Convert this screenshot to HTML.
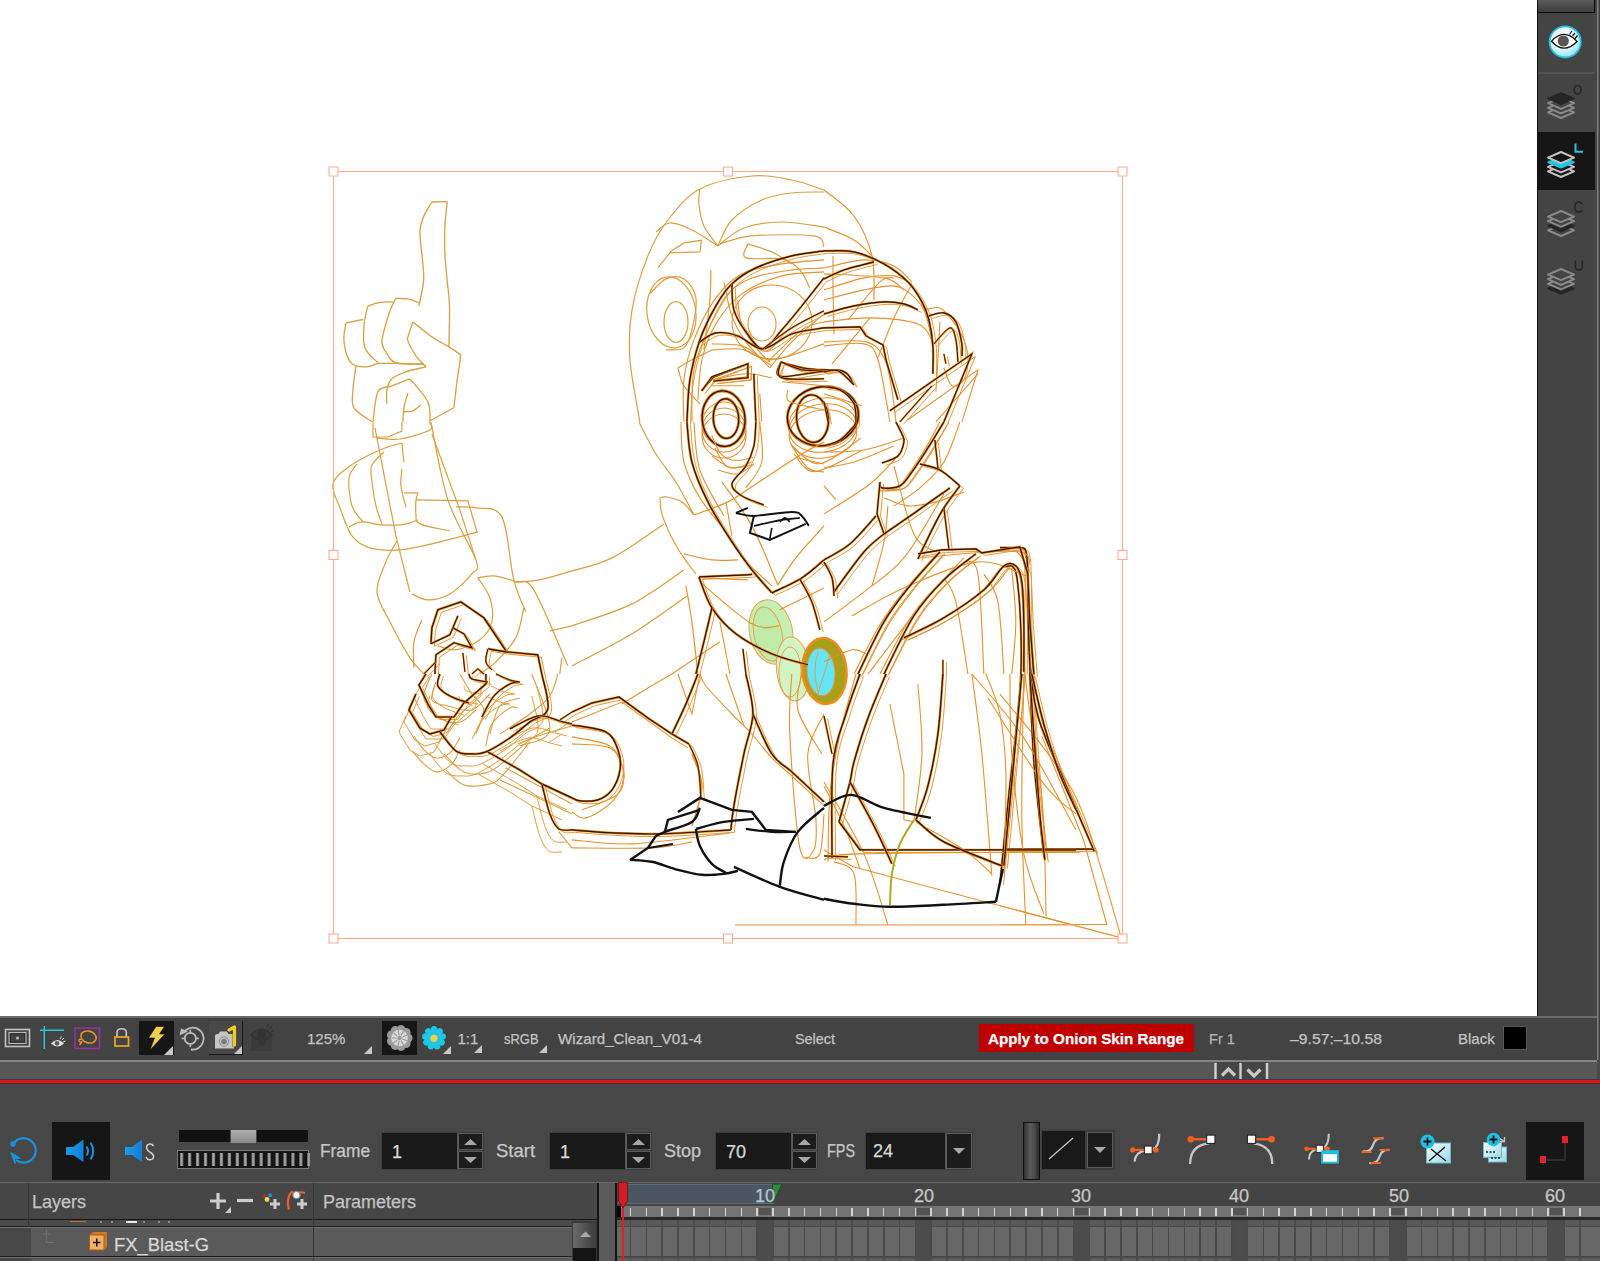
<!DOCTYPE html>
<html><head><meta charset="utf-8"><style>*{margin:0;padding:0;box-sizing:border-box}
html,body{width:1600px;height:1261px;overflow:hidden;background:#474747;font-family:"Liberation Sans",sans-serif;position:relative}
.a{position:absolute}
.t{position:absolute;white-space:nowrap;line-height:1;-webkit-text-stroke:0.25px currentColor}
</style></head><body>
<div class="a" style="left:0px;top:0px;width:1537px;height:1016px;background:#fff;"></div>
<svg class="a" style="left:0;top:0" width="1537" height="1016" viewBox="0 0 1537 1016"><path d="M827.5,858.4 L851.5,859.4" fill="none" stroke="#e49a3a" stroke-width="1"/><path d="M827.5,718.5 L835.5,756.4" fill="none" stroke="#e49a3a" stroke-width="1"/><path d="M1035.3,676.5 C1037.3,684.8 1042.7,709.8 1047.3,726.5 C1052.0,743.1 1057.9,762.1 1063.3,776.4 C1068.7,790.7 1076.8,806.4 1079.5,812.4" fill="none" stroke="#e49a3a" stroke-width="1"/><path d="M1033.3,676.5 C1034.0,686.5 1035.7,713.1 1037.3,736.5 C1039.0,759.8 1041.5,795.4 1043.3,816.4 C1045.2,837.4 1047.5,854.7 1048.3,862.4" fill="none" stroke="#e49a3a" stroke-width="1"/><path d="M1025.3,676.5 C1024.3,687.5 1022.3,710.5 1019.3,742.4 C1016.3,774.4 1009.4,847.4 1007.4,868.3" fill="none" stroke="#e49a3a" stroke-width="1"/><path d="M919.4,822.4 C924.1,826.0 933.1,836.7 947.4,844.4 C961.7,852.0 995.7,864.3 1005.4,868.3" fill="none" stroke="#e49a3a" stroke-width="1"/><path d="M946.4,676.5 C945.6,686.5 943.9,717.8 941.4,736.5 C938.9,755.1 935.1,774.1 931.4,788.4 C927.8,802.7 921.4,816.7 919.4,822.4" fill="none" stroke="#e49a3a" stroke-width="1"/><path d="M853.5,784.4 C857.5,791.7 870.5,814.7 877.5,828.4 C884.5,842.0 892.4,860.0 895.4,866.3" fill="none" stroke="#e49a3a" stroke-width="1"/><path d="M842.5,824.4 L863.5,852.4 L1079.5,852.4" fill="none" stroke="#e49a3a" stroke-width="1"/><path d="M889.5,676.5 C886.5,683.8 876.8,705.8 871.5,720.5 C866.1,735.1 860.5,753.8 857.5,764.4 C854.5,775.1 856.0,774.4 853.5,784.4 C851.0,794.4 844.3,817.7 842.5,824.4" fill="none" stroke="#e49a3a" stroke-width="1"/><path d="M863.5,676.5 C861.1,683.2 854.0,701.5 849.5,716.5 C845.0,731.5 838.8,742.4 836.5,766.4 C834.2,790.4 835.7,844.7 835.5,860.4" fill="none" stroke="#e49a3a" stroke-width="1"/><path d="M756.4,716.5 C759.5,723.1 768.8,746.8 775.3,756.4 C781.8,766.1 786.6,766.4 795.3,774.4 C804.0,782.4 822.1,799.4 827.5,804.4" fill="none" stroke="#e49a3a" stroke-width="1"/><path d="M675.4,736.5 C677.8,731.5 685.1,716.5 689.4,706.5 C693.7,696.5 699.4,681.5 701.4,676.5" fill="none" stroke="#e49a3a" stroke-width="1"/><path d="M734.4,832.4 C734.9,828.4 735.2,821.1 737.4,808.4 C739.5,795.7 744.2,771.8 747.4,756.4 C750.5,741.1 756.0,729.8 756.4,716.5 C756.7,703.1 750.5,683.2 749.4,676.5" fill="none" stroke="#e49a3a" stroke-width="1"/><path d="M575.5,832.4 C582.2,832.9 600.5,834.7 615.5,835.4 C630.5,836.0 645.6,836.9 665.4,836.4 C685.2,835.9 722.9,833.0 734.4,832.4" fill="none" stroke="#e49a3a" stroke-width="1"/><path d="M692.4,746.4 C693.9,750.1 699.4,759.4 701.4,768.4 C703.4,777.4 703.9,795.1 704.4,800.4" fill="none" stroke="#e49a3a" stroke-width="1"/><path d="M575.5,727.5 C581.2,728.6 601.8,730.3 609.5,734.5 C617.1,738.6 619.1,746.1 621.5,752.4 C623.8,758.8 624.5,765.8 623.5,772.4 C622.5,779.1 619.1,787.4 615.5,792.4 C611.8,797.4 606.8,800.6 601.5,802.4 C596.2,804.2 587.8,803.7 583.5,803.4 C579.2,803.1 576.8,800.9 575.5,800.4" fill="none" stroke="#e49a3a" stroke-width="1"/><path d="M575.5,714.5 L595.5,705.5 L622.5,699.5 L651.4,720.5 L675.4,736.5 L692.4,746.4" fill="none" stroke="#e49a3a" stroke-width="1"/><path d="M485.9,696.0 C488.2,697.0 495.9,700.7 499.8,702.0 C503.8,703.3 508.2,703.7 509.8,704.0" fill="none" stroke="#e49a3a" stroke-width="1"/><path d="M490.9,686.0 C493.2,687.0 500.9,690.7 504.8,692.0 C508.8,693.3 513.2,693.7 514.8,694.0" fill="none" stroke="#e49a3a" stroke-width="1"/><path d="M499.4,676.5 C501.7,677.5 509.4,681.2 513.3,682.5 C517.3,683.8 521.7,684.2 523.3,684.5" fill="none" stroke="#e49a3a" stroke-width="1"/><path d="M471.9,739.0 C473.9,735.5 479.2,723.5 483.9,718.0 C488.5,712.5 495.5,708.3 499.8,706.0 C504.2,703.7 508.2,704.3 509.8,704.0" fill="none" stroke="#e49a3a" stroke-width="1"/><path d="M476.9,729.0 C478.9,725.5 484.2,713.5 488.9,708.0 C493.5,702.5 500.5,698.3 504.8,696.0 C509.2,693.7 513.2,694.3 514.8,694.0" fill="none" stroke="#e49a3a" stroke-width="1"/><path d="M485.4,719.5 C487.4,716.0 492.7,704.0 497.4,698.5 C502.0,693.0 509.0,688.8 513.3,686.5 C517.7,684.2 521.7,684.8 523.3,684.5" fill="none" stroke="#e49a3a" stroke-width="1"/><path d="M531.8,805.9 C533.2,810.9 537.0,828.4 539.8,835.9 C542.6,843.4 545.1,848.2 548.8,850.9 C552.5,853.5 559.8,851.7 562.0,851.9" fill="none" stroke="#e49a3a" stroke-width="1"/><path d="M536.8,795.9 C538.2,800.9 542.0,818.4 544.8,825.9 C547.6,833.4 550.1,838.2 553.8,840.9 C557.5,843.5 564.8,841.7 567.0,841.9" fill="none" stroke="#e49a3a" stroke-width="1"/><path d="M545.3,786.4 C546.7,791.4 550.5,808.9 553.3,816.4 C556.1,823.9 558.6,828.7 562.3,831.4 C566.0,834.0 573.3,832.2 575.5,832.4" fill="none" stroke="#e49a3a" stroke-width="1"/><path d="M477.9,773.9 L509.8,791.9 L531.8,805.9 L562.0,819.9" fill="none" stroke="#e49a3a" stroke-width="1"/><path d="M482.9,763.9 L514.8,781.9 L536.8,795.9 L567.0,809.9" fill="none" stroke="#e49a3a" stroke-width="1"/><path d="M491.4,754.4 L523.3,772.4 L545.3,786.4 L575.5,800.4" fill="none" stroke="#e49a3a" stroke-width="1"/><path d="M549.8,742.0 L562.0,734.0" fill="none" stroke="#e49a3a" stroke-width="1"/><path d="M554.8,732.0 L567.0,724.0" fill="none" stroke="#e49a3a" stroke-width="1"/><path d="M563.3,722.5 L575.5,714.5" fill="none" stroke="#e49a3a" stroke-width="1"/><path d="M499.8,751.0 C504.5,748.8 519.5,739.3 527.8,738.0 C536.2,736.6 544.1,741.6 549.8,743.0 C555.5,744.3 560.0,745.5 562.0,746.0" fill="none" stroke="#e49a3a" stroke-width="1"/><path d="M504.8,741.0 C509.5,738.8 524.5,729.3 532.8,728.0 C541.2,726.6 549.1,731.6 554.8,733.0 C560.5,734.3 565.0,735.5 567.0,736.0" fill="none" stroke="#e49a3a" stroke-width="1"/><path d="M513.3,731.5 C518.0,729.3 533.0,719.8 541.3,718.5 C549.7,717.1 557.6,722.1 563.3,723.5 C569.0,724.8 573.5,726.0 575.5,726.5" fill="none" stroke="#e49a3a" stroke-width="1"/><path d="M429.9,754.0 C432.6,757.1 440.6,769.3 445.9,772.9 C451.2,776.6 456.9,775.8 461.9,775.9 C466.9,776.1 469.5,776.6 475.9,773.9 C482.2,771.3 492.5,764.9 499.8,759.9 C507.2,755.0 513.5,748.8 519.8,744.0 C526.2,739.1 535.8,739.0 537.8,731.0 C539.8,723.0 532.8,701.8 531.8,696.0" fill="none" stroke="#e49a3a" stroke-width="1"/><path d="M434.9,744.0 C437.6,747.1 445.6,759.3 450.9,762.9 C456.2,766.6 461.9,765.8 466.9,765.9 C471.9,766.1 474.5,766.6 480.9,763.9 C487.2,761.3 497.5,754.9 504.8,749.9 C512.2,745.0 518.5,738.8 524.8,734.0 C531.2,729.1 540.8,729.0 542.8,721.0 C544.8,713.0 537.8,691.8 536.8,686.0" fill="none" stroke="#e49a3a" stroke-width="1"/><path d="M443.4,734.5 C446.1,737.6 454.1,749.8 459.4,753.4 C464.7,757.1 470.4,756.3 475.4,756.4 C480.4,756.6 483.0,757.1 489.4,754.4 C495.7,751.8 506.0,745.4 513.3,740.4 C520.7,735.5 527.0,729.3 533.3,724.5 C539.7,719.6 549.3,719.5 551.3,711.5 C553.3,703.5 546.3,682.3 545.3,676.5" fill="none" stroke="#e49a3a" stroke-width="1"/><path d="M405.9,716.0 L398.9,732.0 L409.9,750.0 L419.9,756.0 L433.9,752.0 L441.9,738.0" fill="none" stroke="#e49a3a" stroke-width="1"/><path d="M410.9,706.0 L403.9,722.0 L414.9,740.0 L424.9,746.0 L438.9,742.0 L446.9,728.0" fill="none" stroke="#e49a3a" stroke-width="1"/><path d="M419.4,696.5 L412.4,712.5 L423.4,730.5 L433.4,736.5 L447.4,732.5 L455.4,718.5" fill="none" stroke="#e49a3a" stroke-width="1"/><path d="M458.9,696.0 C459.4,696.8 458.7,699.7 461.9,701.0 C465.0,702.3 475.2,703.5 477.9,704.0" fill="none" stroke="#e49a3a" stroke-width="1"/><path d="M463.9,686.0 C464.4,686.8 463.7,689.7 466.9,691.0 C470.0,692.3 480.2,693.5 482.9,694.0" fill="none" stroke="#e49a3a" stroke-width="1"/><path d="M472.4,676.5 C472.9,677.3 472.2,680.2 475.4,681.5 C478.5,682.8 488.7,684.0 491.4,684.5" fill="none" stroke="#e49a3a" stroke-width="1"/><path d="M429.9,696.0 C429.6,698.0 426.2,704.3 427.9,708.0 C429.6,711.7 434.7,715.2 439.9,718.0 C445.1,720.8 455.7,723.8 458.9,725.0" fill="none" stroke="#e49a3a" stroke-width="1"/><path d="M434.9,686.0 C434.6,688.0 431.2,694.3 432.9,698.0 C434.6,701.7 439.7,705.2 444.9,708.0 C450.1,710.8 460.7,713.8 463.9,715.0" fill="none" stroke="#e49a3a" stroke-width="1"/><path d="M443.4,676.5 C443.1,678.5 439.7,684.8 441.4,688.5 C443.1,692.2 448.2,695.7 453.4,698.5 C458.6,701.3 469.2,704.3 472.4,705.5" fill="none" stroke="#e49a3a" stroke-width="1"/><path d="M415.9,696.0 L408.9,707.0 L417.9,726.0 L425.9,739.0 L443.9,739.0 L453.9,725.0 L475.9,706.0 L475.9,696.0" fill="none" stroke="#e49a3a" stroke-width="1"/><path d="M420.9,686.0 L413.9,697.0 L422.9,716.0 L430.9,729.0 L448.9,729.0 L458.9,715.0 L480.9,696.0 L480.9,686.0" fill="none" stroke="#e49a3a" stroke-width="1"/><path d="M429.4,676.5 L422.4,687.5 L431.4,706.5 L439.4,719.5 L457.4,719.5 L467.4,705.5 L489.4,686.5 L489.4,676.5" fill="none" stroke="#e49a3a" stroke-width="1"/><path d="M946.4,662.3 L946.4,676.5" fill="none" stroke="#e49a3a" stroke-width="1"/><path d="M827.5,564.4 C828.8,567.1 833.8,574.7 835.5,580.4 C837.2,586.0 837.2,595.4 837.5,598.4" fill="none" stroke="#e49a3a" stroke-width="1"/><path d="M907.4,640.3 C914.1,637.0 934.1,628.3 947.4,620.3 C960.7,612.3 977.4,601.0 987.4,592.4 C997.4,583.7 1002.0,572.4 1007.4,568.4 C1012.7,564.4 1016.3,565.7 1019.3,568.4 C1022.3,571.0 1024.0,575.0 1025.3,584.4 C1026.7,593.7 1027.0,609.4 1027.3,624.3 C1027.7,639.3 1027.3,666.0 1027.3,674.3" fill="none" stroke="#e49a3a" stroke-width="1"/><path d="M943.4,554.4 C938.4,560.1 922.8,576.7 913.4,588.4 C904.1,600.0 896.1,609.7 887.5,624.3 C878.8,639.0 865.8,667.8 861.5,676.5" fill="none" stroke="#e49a3a" stroke-width="1"/><path d="M979.4,556.4 C974.0,560.7 957.7,572.0 947.4,582.4 C937.1,592.7 927.4,602.7 917.4,618.3 C907.4,634.0 892.4,666.8 887.5,676.5" fill="none" stroke="#e49a3a" stroke-width="1"/><path d="M921.4,556.4 L945.4,552.4 L979.4,551.4 L985.4,555.4 L1023.3,549.4 L1031.3,576.4 L1033.3,624.3 L1037.3,676.5" fill="none" stroke="#e49a3a" stroke-width="1"/><path d="M947.4,510.4 L952.4,551.4" fill="none" stroke="#e49a3a" stroke-width="1"/><path d="M963.4,488.4 C960.7,492.1 952.1,503.1 947.4,510.4 C942.7,517.8 939.7,523.9 935.4,532.4 C931.1,540.9 923.8,556.6 921.4,561.4" fill="none" stroke="#e49a3a" stroke-width="1"/><path d="M837.5,594.4 C842.5,587.7 859.1,564.1 867.5,554.4 C875.8,544.7 884.1,539.4 887.5,536.4" fill="none" stroke="#e49a3a" stroke-width="1"/><path d="M887.5,536.4 C892.8,532.7 908.4,522.1 919.4,514.4 C930.4,506.8 947.7,494.4 953.4,490.4" fill="none" stroke="#e49a3a" stroke-width="1"/><path d="M827.5,562.4 C831.8,559.7 844.8,553.7 853.5,546.4 C862.1,539.1 875.1,523.1 879.5,518.4" fill="none" stroke="#e49a3a" stroke-width="1"/><path d="M938.4,442.5 L941.4,470.5" fill="none" stroke="#e49a3a" stroke-width="1"/><path d="M923.4,466.5 C926.8,467.5 936.7,468.8 943.4,472.5 C950.1,476.1 960.1,485.8 963.4,488.4" fill="none" stroke="#e49a3a" stroke-width="1"/><path d="M883.5,484.5 L880.5,516.4 L887.5,536.4" fill="none" stroke="#e49a3a" stroke-width="1"/><path d="M947.4,424.5 C944.7,428.8 936.7,442.2 931.4,450.5 C926.1,458.8 920.1,468.1 915.4,474.5 C910.8,480.8 908.4,485.8 903.4,488.4 C898.4,491.1 888.8,491.1 885.5,490.4 C882.1,489.8 883.8,485.5 883.5,484.5" fill="none" stroke="#e49a3a" stroke-width="1"/><path d="M899.4,424.5 C900.4,426.5 904.1,433.2 905.4,436.5 C906.8,439.8 908.1,440.8 907.4,444.5 C906.8,448.1 905.1,455.0 901.4,458.5 C897.8,462.0 888.1,464.3 885.5,465.5" fill="none" stroke="#e49a3a" stroke-width="1"/><path d="M827.5,448.5 C830.2,447.5 838.5,445.8 843.5,442.5 C848.5,439.2 854.8,431.5 857.5,428.5 C860.1,425.5 859.1,425.2 859.5,424.5" fill="none" stroke="#e49a3a" stroke-width="1"/><path d="M759.4,424.5 C759.0,428.5 759.0,441.2 757.4,448.5 C755.7,455.8 753.0,462.1 749.4,468.5 C745.7,474.8 736.0,481.5 735.4,486.5 C734.7,491.4 740.0,494.9 745.4,498.4 C750.7,501.9 763.7,505.9 767.3,507.4" fill="none" stroke="#e49a3a" stroke-width="1"/><path d="M803.3,581.4 C805.3,585.2 812.0,595.9 815.3,604.4 C818.6,612.8 822.0,627.7 823.3,632.3" fill="none" stroke="#e49a3a" stroke-width="1"/><path d="M746.4,651.3 L749.4,676.5" fill="none" stroke="#e49a3a" stroke-width="1"/><path d="M715.4,610.4 C714.1,616.0 710.1,633.3 707.4,644.3 C704.7,655.3 700.7,671.1 699.4,676.5" fill="none" stroke="#e49a3a" stroke-width="1"/><path d="M702.4,579.4 C704.6,584.5 709.2,600.9 715.4,610.4 C721.5,619.8 729.4,628.7 739.4,636.3 C749.4,644.0 763.3,651.2 775.3,656.3 C787.3,661.5 805.3,665.5 811.3,667.3" fill="none" stroke="#e49a3a" stroke-width="1"/><path d="M702.4,579.4 C710.2,579.0 740.5,577.9 749.4,577.4 C758.2,576.9 754.4,576.5 755.4,576.4" fill="none" stroke="#e49a3a" stroke-width="1"/><path d="M775.3,595.4 C780.3,592.9 796.6,585.9 805.3,580.4 C814.0,574.9 823.8,565.4 827.5,562.4" fill="none" stroke="#e49a3a" stroke-width="1"/><path d="M690.4,424.5 C691.2,431.2 691.9,451.1 695.4,464.5 C698.9,477.8 704.7,491.1 711.4,504.4 C718.1,517.8 728.0,533.1 735.4,544.4 C742.7,555.7 748.7,563.9 755.4,572.4 C762.0,580.9 772.0,591.5 775.3,595.4" fill="none" stroke="#e49a3a" stroke-width="1"/><path d="M427.4,676.5 L439.4,664.3" fill="none" stroke="#e49a3a" stroke-width="1"/><path d="M475.4,676.5 L481.4,671.3 L487.4,676.5" fill="none" stroke="#e49a3a" stroke-width="1"/><path d="M466.4,655.3 L468.4,674.3" fill="none" stroke="#e49a3a" stroke-width="1"/><path d="M491.4,651.3 C491.0,653.5 488.7,660.8 489.4,664.3 C490.0,667.8 494.4,671.0 495.4,672.3" fill="none" stroke="#e49a3a" stroke-width="1"/><path d="M491.4,651.3 L509.4,654.3 L541.3,657.3 L545.3,676.5" fill="none" stroke="#e49a3a" stroke-width="1"/><path d="M456.4,630.3 L467.4,636.3 L475.4,650.3 L457.4,645.3 L439.4,657.3 L438.4,676.5" fill="none" stroke="#e49a3a" stroke-width="1"/><path d="M434.4,646.3 L453.4,637.3 L456.4,630.3 L461.4,618.3" fill="none" stroke="#e49a3a" stroke-width="1"/><path d="M434.4,646.3 L435.4,630.3 L441.4,612.3 L464.4,604.4 L487.4,620.3 L509.4,653.3" fill="none" stroke="#e49a3a" stroke-width="1"/><path d="M827.5,404.3 L831.5,424.3" fill="none" stroke="#e49a3a" stroke-width="1"/><path d="M827.5,389.3 C830.2,389.8 838.5,389.5 843.5,392.3 C848.5,395.2 854.8,401.0 857.5,406.3 C860.1,411.6 859.1,421.3 859.5,424.3" fill="none" stroke="#e49a3a" stroke-width="1"/><path d="M827.5,374.3 C829.8,374.2 836.5,371.2 841.5,373.3 C846.5,375.5 854.8,385.0 857.5,387.3" fill="none" stroke="#e49a3a" stroke-width="1"/><path d="M903.4,424.3 L935.4,388.3" fill="none" stroke="#e49a3a" stroke-width="1"/><path d="M893.4,413.3 L975.4,356.4 L947.4,424.3" fill="none" stroke="#e49a3a" stroke-width="1"/><path d="M947.4,356.4 L949.4,366.3" fill="none" stroke="#e49a3a" stroke-width="1"/><path d="M937.4,346.4 C940.1,343.7 949.7,331.0 953.4,330.4 C957.1,329.7 958.1,336.7 959.4,342.4 C960.7,348.0 961.1,360.7 961.4,364.3" fill="none" stroke="#e49a3a" stroke-width="1"/><path d="M932.4,318.4 C934.9,317.9 942.9,314.4 947.4,315.4 C951.9,316.4 956.4,319.2 959.4,324.4 C962.4,329.5 964.4,340.7 965.4,346.4 C966.4,352.0 965.4,356.4 965.4,358.4" fill="none" stroke="#e49a3a" stroke-width="1"/><path d="M827.5,330.4 L863.5,329.4 L869.5,338.4 L886.5,347.4 L889.5,362.3 L901.4,402.3" fill="none" stroke="#e49a3a" stroke-width="1"/><path d="M827.5,316.4 C832.5,315.1 847.5,310.4 857.5,308.4 C867.5,306.4 879.1,304.7 887.5,304.4 C895.8,304.1 901.8,305.1 907.4,306.4 C913.1,307.7 919.1,311.4 921.4,312.4" fill="none" stroke="#e49a3a" stroke-width="1"/><path d="M827.5,281.4 C830.8,279.9 839.2,275.3 847.5,272.4 C855.8,269.6 872.5,265.8 877.5,264.4" fill="none" stroke="#e49a3a" stroke-width="1"/><path d="M827.5,253.4 C832.5,253.6 847.5,252.3 857.5,254.4 C867.5,256.6 878.5,261.4 887.5,266.4 C896.4,271.4 905.1,278.1 911.4,284.4 C917.8,290.7 921.9,298.1 925.4,304.4 C928.9,310.7 930.6,315.1 932.4,322.4 C934.2,329.7 935.7,339.4 936.4,348.4 C937.1,357.4 936.4,371.7 936.4,376.3" fill="none" stroke="#e49a3a" stroke-width="1"/><path d="M757.4,376.3 C757.5,380.7 758.0,394.3 758.4,402.3 C758.7,410.3 759.2,420.6 759.4,424.3" fill="none" stroke="#e49a3a" stroke-width="1"/><path d="M784.3,364.3 C787.8,365.7 798.1,371.0 805.3,372.3 C812.5,373.7 823.8,372.3 827.5,372.3" fill="none" stroke="#e49a3a" stroke-width="1"/><path d="M784.3,364.3 C784.5,367.0 778.1,377.5 785.3,380.3 C792.5,383.2 820.5,381.2 827.5,381.3" fill="none" stroke="#e49a3a" stroke-width="1"/><path d="M705.4,393.3 L715.4,379.3 L751.4,366.3 L751.4,380.3 L719.4,383.3" fill="none" stroke="#e49a3a" stroke-width="1"/><path d="M766.3,351.4 C771.2,347.9 785.1,336.7 795.3,330.4 C805.5,324.0 822.1,316.2 827.5,313.4" fill="none" stroke="#e49a3a" stroke-width="1"/><path d="M703.4,344.4 C706.1,342.9 713.1,336.4 719.4,335.4 C725.7,334.4 733.5,335.7 741.4,338.4 C749.2,341.0 757.4,351.7 766.3,351.4 C775.3,351.0 785.1,339.9 795.3,336.4 C805.5,332.9 822.1,331.4 827.5,330.4" fill="none" stroke="#e49a3a" stroke-width="1"/><path d="M735.4,286.4 C735.7,290.7 735.0,304.4 737.4,312.4 C739.7,320.4 744.5,327.9 749.4,334.4 C754.2,340.9 760.4,351.7 766.3,351.4 C772.3,351.0 778.8,339.5 785.3,332.4 C791.8,325.2 798.3,317.1 805.3,308.4 C812.3,299.7 823.8,285.1 827.5,280.4" fill="none" stroke="#e49a3a" stroke-width="1"/><path d="M690.4,424.3 C690.9,417.3 691.2,396.0 693.4,382.3 C695.6,368.7 699.1,354.7 703.4,342.4 C707.7,330.0 714.1,317.7 719.4,308.4 C724.7,299.1 728.7,292.7 735.4,286.4 C742.0,280.1 749.4,275.1 759.4,270.4 C769.3,265.8 784.0,261.3 795.3,258.4 C806.7,255.6 822.1,254.3 827.5,253.4" fill="none" stroke="#e49a3a" stroke-width="1"/><path d="M784.2,364.7 C788.6,365.8 800.7,369.7 810.4,371.0 C820.0,372.4 836.8,372.4 842.1,372.6" fill="none" stroke="#e49a3a" stroke-width="1"/><path d="M784.2,364.7 C784.3,367.1 775.4,377.7 785.0,379.0 C794.7,380.3 830.1,371.3 842.1,372.6 C854.1,374.0 854.7,384.5 857.2,386.9" fill="none" stroke="#e49a3a" stroke-width="1"/><path d="M704.9,393.3 L716.8,379.8 L751.7,366.3 L750.9,379.8 L716.8,383.7" fill="none" stroke="#e49a3a" stroke-width="1"/><path d="M1003.5,550.1 L1024.4,550.1" fill="none" stroke="#e49a3a" stroke-width="1"/><path d="M1032.8,654.8 C1033.5,672.3 1034.6,725.3 1037.0,759.5 C1039.4,793.7 1045.7,843.3 1047.5,860.0" fill="none" stroke="#e49a3a" stroke-width="1"/><path d="M1007.7,569.0 C1009.8,570.7 1017.5,561.6 1020.3,579.4 C1023.0,597.2 1025.8,638.8 1024.4,675.8 C1023.0,712.7 1015.4,766.5 1011.9,801.4 C1008.4,836.3 1004.9,871.2 1003.5,885.1" fill="none" stroke="#e49a3a" stroke-width="1"/><path d="M1007.7,851.6 L1097.7,851.6" fill="none" stroke="#e49a3a" stroke-width="1"/><path d="M1024.4,550.1 C1025.5,552.2 1029.3,545.2 1030.7,562.7 C1032.1,580.1 1031.1,629.0 1032.8,654.8 C1034.6,680.6 1035.6,696.7 1041.2,717.6 C1046.8,738.6 1056.9,757.8 1066.3,780.4 C1075.7,803.1 1092.5,841.5 1097.7,853.7" fill="none" stroke="#e49a3a" stroke-width="1"/><ellipse cx="771" cy="632" rx="21.5" ry="32.5" transform="rotate(-12 771 632)" fill="#c6efb2" stroke="#e8a050" stroke-width="1"/><ellipse cx="768" cy="634" rx="14" ry="27.5" transform="rotate(-12 768 634)" fill="#bfeca8" stroke="#e8a050" stroke-width="1"/><ellipse cx="793" cy="669" rx="16.5" ry="32" transform="rotate(-5 793 669)" fill="#d2f4c2" stroke="#e8a050" stroke-width="1"/><ellipse cx="790" cy="672" rx="11" ry="25" fill="none" stroke="#e8a050" stroke-width="1"/><ellipse cx="824.5" cy="671" rx="22" ry="33" transform="rotate(-5 824.5 671)" fill="#a8a018" stroke="#f08a20" stroke-width="2.5"/><ellipse cx="821" cy="672" rx="14" ry="24" transform="rotate(-5 821 672)" fill="#62e6f8" stroke="#e89040" stroke-width="1.2"/><path d="M818,652 Q812,670 818,692 M830,655 Q822,680 818,694" fill="none" stroke="#e89a50" stroke-width="1"/><path d="M431.9,202.0 C430.6,204.3 425.9,211.0 423.9,216.0 C421.9,221.0 420.1,224.0 419.9,232.0 C419.8,239.9 422.3,255.6 422.9,263.9 C423.5,272.3 424.2,274.9 423.5,281.9 C422.9,288.9 419.7,301.9 418.9,305.9" fill="none" stroke="#d6a040" stroke-width="1.3"/><path d="M431.9,202.0 L447.3,201.6" fill="none" stroke="#d6a040" stroke-width="1.3"/><path d="M447.3,201.6 C446.9,205.6 445.3,217.2 444.9,226.0 C444.5,234.7 444.5,244.6 444.9,253.9 C445.3,263.3 446.5,273.3 447.3,281.9 C448.1,290.6 449.2,295.1 449.5,305.9 C449.8,316.7 449.0,340.0 448.9,346.9" fill="none" stroke="#d6a040" stroke-width="1.3"/><path d="M418.9,302.9 C417.1,302.2 411.8,299.6 407.9,298.9 C404.0,298.2 397.6,298.6 395.5,298.5" fill="none" stroke="#d6a040" stroke-width="1.3"/><path d="M395.5,298.5 C394.4,301.1 391.2,306.8 388.9,313.9 C386.7,320.9 382.5,334.5 382.0,340.9 C381.5,347.2 383.6,348.2 385.9,351.9 C388.3,355.5 389.6,360.8 395.9,362.8 C402.3,364.9 419.3,364.0 423.9,364.2" fill="none" stroke="#d6a040" stroke-width="1.3"/><path d="M392.9,301.9 C390.8,302.0 384.2,301.6 380.0,302.3 C375.7,303.0 369.6,305.6 367.6,306.3" fill="none" stroke="#d6a040" stroke-width="1.3"/><path d="M367.6,306.3 C367.0,309.6 364.4,318.9 364.0,325.9 C363.5,332.8 362.6,341.7 365.0,347.9 C367.3,354.0 375.8,360.3 378.0,362.8" fill="none" stroke="#d6a040" stroke-width="1.3"/><path d="M363.0,319.5 L346.0,322.9" fill="none" stroke="#d6a040" stroke-width="1.3"/><path d="M346.0,322.9 C345.6,326.0 343.1,335.2 344.0,341.9 C344.8,348.5 347.3,358.7 351.0,362.8 C354.6,367.0 361.5,366.7 366.0,366.8 C370.5,366.9 376.0,364.0 378.0,363.4" fill="none" stroke="#d6a040" stroke-width="1.3"/><path d="M378.0,363.4 C381.1,363.4 389.3,363.3 396.9,363.4 C404.6,363.6 419.4,364.1 423.9,364.2" fill="none" stroke="#d6a040" stroke-width="1.3"/><path d="M412.9,321.9 C416.1,324.4 425.9,332.7 431.9,336.9 C437.9,341.0 444.1,343.9 448.9,346.9 C453.7,349.9 458.9,353.5 460.9,354.9" fill="none" stroke="#d6a040" stroke-width="1.3"/><path d="M460.9,354.9 L456.9,381.8 L453.9,407.8" fill="none" stroke="#d6a040" stroke-width="1.3"/><path d="M453.9,407.8 L429.9,420.8" fill="none" stroke="#d6a040" stroke-width="1.3"/><path d="M412.9,321.9 C412.3,323.9 409.8,330.7 408.9,333.9 C408.1,337.0 406.8,337.2 407.9,340.9 C409.1,344.5 412.9,351.5 415.9,355.9 C418.9,360.2 424.2,365.0 425.9,366.8" fill="none" stroke="#d6a040" stroke-width="1.3"/><path d="M425.9,366.8 C422.6,367.7 411.6,369.8 405.9,371.8 C400.3,373.8 395.1,375.8 391.9,378.8 C388.8,381.8 387.8,385.7 386.9,389.8 C386.1,394.0 386.9,401.5 386.9,403.8" fill="none" stroke="#d6a040" stroke-width="1.3"/><path d="M356.0,365.8 C355.5,369.8 353.3,382.8 353.0,389.8 C352.6,396.8 350.8,402.5 354.0,407.8 C357.1,413.1 369.0,419.5 372.0,421.8" fill="none" stroke="#d6a040" stroke-width="1.3"/><path d="M409.9,378.8 C406.9,380.0 397.3,383.7 391.9,385.8 C386.6,388.0 381.1,385.8 378.0,391.8 C374.8,397.8 373.8,416.8 373.0,421.8" fill="none" stroke="#d6a040" stroke-width="1.3"/><path d="M409.9,378.8 C412.9,382.7 424.6,394.7 427.9,401.8 C431.2,409.0 429.6,418.5 429.9,421.8" fill="none" stroke="#d6a040" stroke-width="1.3"/><path d="M407.9,392.8 C407.3,395.3 404.8,403.0 403.9,407.8 C403.1,412.6 403.1,419.5 402.9,421.8" fill="none" stroke="#d6a040" stroke-width="1.3"/><path d="M403.9,411.8 C405.4,411.6 410.1,412.0 412.9,410.8 C415.8,409.6 419.6,405.8 420.9,404.8" fill="none" stroke="#d6a040" stroke-width="1.3"/><path d="M1000.0,905.7 L1121.4,937.9" fill="none" stroke="#e3922e" stroke-width="1.1"/><path d="M1000.0,924.5 L1106.8,924.5 L1083.8,840.8 L1041.9,736.1" fill="none" stroke="#e3922e" stroke-width="1.1"/><path d="M1000.0,694.2 C1008.4,704.7 1036.3,736.8 1050.3,757.0 C1064.2,777.2 1071.9,785.5 1083.8,815.6 C1095.6,845.8 1115.2,917.5 1121.4,937.9" fill="none" stroke="#e3922e" stroke-width="1.1"/><path d="M1016.8,551.8 C1018.1,555.3 1023.7,552.5 1025.1,572.8 C1026.5,593.0 1022.3,635.6 1025.1,673.3 C1027.9,710.9 1038.4,758.4 1041.9,798.9 C1045.4,839.4 1045.4,896.6 1046.1,916.1" fill="none" stroke="#e3922e" stroke-width="1.1"/><path d="M1020.9,547.6 C1022.0,549.7 1025.8,542.7 1027.2,560.2 C1028.6,577.6 1027.6,626.5 1029.3,652.3 C1031.1,678.1 1032.1,694.2 1037.7,715.1 C1043.3,736.1 1053.4,755.3 1062.8,777.9 C1072.2,800.6 1089.0,839.0 1094.2,851.2" fill="none" stroke="#e8841c" stroke-width="2.4"/><path d="M1020.9,547.6 C1022.0,549.7 1025.8,542.7 1027.2,560.2 C1028.6,577.6 1027.6,626.5 1029.3,652.3 C1031.1,678.1 1032.1,694.2 1037.7,715.1 C1043.3,736.1 1053.4,755.3 1062.8,777.9 C1072.2,800.6 1089.0,839.0 1094.2,851.2" fill="none" stroke="#2a1206" stroke-width="1.2"/><path d="M1004.2,849.1 L1094.2,849.1" fill="none" stroke="#e8841c" stroke-width="2.2"/><path d="M1004.2,849.1 L1094.2,849.1" fill="none" stroke="#2a1206" stroke-width="1.1"/><path d="M1004.2,566.5 C1006.3,568.2 1014.0,559.1 1016.8,576.9 C1019.5,594.7 1022.3,636.3 1020.9,673.3 C1019.5,710.2 1011.9,764.0 1008.4,798.9 C1004.9,833.8 1001.4,868.7 1000.0,882.6" fill="none" stroke="#e8841c" stroke-width="2.2"/><path d="M1004.2,566.5 C1006.3,568.2 1014.0,559.1 1016.8,576.9 C1019.5,594.7 1022.3,636.3 1020.9,673.3 C1019.5,710.2 1011.9,764.0 1008.4,798.9 C1004.9,833.8 1001.4,868.7 1000.0,882.6" fill="none" stroke="#2a1206" stroke-width="1.1"/><path d="M1029.3,652.3 C1030.0,669.8 1031.1,722.8 1033.5,757.0 C1035.9,791.2 1042.2,840.8 1044.0,857.5" fill="none" stroke="#e8841c" stroke-width="2.0"/><path d="M1029.3,652.3 C1030.0,669.8 1031.1,722.8 1033.5,757.0 C1035.9,791.2 1042.2,840.8 1044.0,857.5" fill="none" stroke="#2a1206" stroke-width="1.0"/><path d="M1000.0,547.6 L1020.9,547.6" fill="none" stroke="#e8841c" stroke-width="2.2"/><path d="M1000.0,547.6 L1020.9,547.6" fill="none" stroke="#2a1206" stroke-width="1.1"/><ellipse cx="724" cy="424" rx="22" ry="22" transform="rotate(0 724 424)" fill="none" stroke="#e3922e" stroke-width="1.1"/><ellipse cx="823" cy="422" rx="34" ry="24" transform="rotate(-8 823 422)" fill="none" stroke="#e3922e" stroke-width="1.1"/><ellipse cx="724" cy="430" rx="22" ry="22" transform="rotate(0 724 430)" fill="none" stroke="#e3922e" stroke-width="1.1"/><ellipse cx="823" cy="428" rx="34" ry="24" transform="rotate(-8 823 428)" fill="none" stroke="#e3922e" stroke-width="1.1"/><ellipse cx="724" cy="436" rx="22" ry="22" transform="rotate(0 724 436)" fill="none" stroke="#e3922e" stroke-width="1.1"/><ellipse cx="823" cy="434" rx="34" ry="24" transform="rotate(-8 823 434)" fill="none" stroke="#e3922e" stroke-width="1.1"/><ellipse cx="723.6" cy="418.6" rx="21.4" ry="27.8" transform="rotate(-5 723.6 418.6)" fill="none" stroke="#e8841c" stroke-width="3.1"/><ellipse cx="723.6" cy="418.6" rx="21.4" ry="27.8" transform="rotate(-5 723.6 418.6)" fill="none" stroke="#2a1206" stroke-width="1.3"/><ellipse cx="726" cy="418.6" rx="12.7" ry="19.8" transform="rotate(-3 726 418.6)" fill="none" stroke="#e8841c" stroke-width="2.9"/><ellipse cx="726" cy="418.6" rx="12.7" ry="19.8" transform="rotate(-3 726 418.6)" fill="none" stroke="#2a1206" stroke-width="1.2"/><ellipse cx="822.9" cy="416.2" rx="35.7" ry="29.4" transform="rotate(-10 822.9 416.2)" fill="none" stroke="#e8841c" stroke-width="3.1"/><ellipse cx="822.9" cy="416.2" rx="35.7" ry="29.4" transform="rotate(-10 822.9 416.2)" fill="none" stroke="#2a1206" stroke-width="1.3"/><ellipse cx="812.5" cy="418.6" rx="15.9" ry="23.8" transform="rotate(-5 812.5 418.6)" fill="none" stroke="#e8841c" stroke-width="2.9"/><ellipse cx="812.5" cy="418.6" rx="15.9" ry="23.8" transform="rotate(-5 812.5 418.6)" fill="none" stroke="#2a1206" stroke-width="1.2"/><path d="M701.4,390.8 L713.3,377.3 L748.2,363.8 L747.4,377.3 L713.3,381.2" fill="none" stroke="#e8841c" stroke-width="2.2"/><path d="M701.4,390.8 L713.3,377.3 L748.2,363.8 L747.4,377.3 L713.3,381.2" fill="none" stroke="#2a1206" stroke-width="1.1"/><path d="M780.7,362.2 C780.8,364.6 771.9,375.2 781.5,376.5 C791.2,377.8 826.6,368.8 838.6,370.1 C850.6,371.5 851.2,382.0 853.7,384.4" fill="none" stroke="#e8841c" stroke-width="2.2"/><path d="M780.7,362.2 C780.8,364.6 771.9,375.2 781.5,376.5 C791.2,377.8 826.6,368.8 838.6,370.1 C850.6,371.5 851.2,382.0 853.7,384.4" fill="none" stroke="#2a1206" stroke-width="1.1"/><path d="M780.7,362.2 C785.1,363.3 797.2,367.2 806.9,368.5 C816.5,369.9 833.3,369.9 838.6,370.1" fill="none" stroke="#e8841c" stroke-width="2.2"/><path d="M780.7,362.2 C785.1,363.3 797.2,367.2 806.9,368.5 C816.5,369.9 833.3,369.9 838.6,370.1" fill="none" stroke="#2a1206" stroke-width="1.1"/><path d="M711.7,435.2 C713.3,438.3 717.3,450.0 721.2,454.2 C725.2,458.4 730.2,460.0 735.5,460.5 C740.8,461.1 750.1,457.9 753.0,457.4" fill="none" stroke="#e3922e" stroke-width="1.1"/><path d="M714.9,447.9 C717.0,451.0 721.5,464.0 727.6,466.9 C733.7,469.8 747.4,465.6 751.4,465.3" fill="none" stroke="#e3922e" stroke-width="1.1"/><path d="M794.2,454.2 C797.6,457.1 803.7,472.2 814.8,471.6 C825.9,471.1 853.1,454.5 860.8,451.0" fill="none" stroke="#e3922e" stroke-width="1.1"/><path d="M791.0,444.7 C795.8,447.9 807.9,464.8 819.6,463.7 C831.2,462.7 853.9,442.6 860.8,438.3" fill="none" stroke="#e3922e" stroke-width="1.1"/><path d="M639.9,421.8 C638.3,411.5 631.3,378.5 630.0,359.8 C628.6,341.2 629.0,327.2 632.0,309.9 C634.9,292.6 641.9,270.9 647.9,255.9 C653.9,240.9 659.3,231.1 667.9,220.0 C676.6,208.8 685.9,196.3 699.9,189.0 C713.9,181.7 736.5,177.5 751.9,176.0 C767.2,174.5 779.8,177.7 791.8,180.0 C803.8,182.3 818.6,188.3 824.0,190.0" fill="none" stroke="#d6a040" stroke-width="1.2"/><path d="M699.9,189.0 C699.7,191.5 698.2,197.8 698.9,204.0 C699.6,210.1 700.7,219.0 703.9,226.0 C707.1,232.9 715.6,242.6 717.9,245.9" fill="none" stroke="#d6a040" stroke-width="1.2"/><path d="M717.9,245.9 C720.2,241.6 724.5,227.6 731.9,220.0 C739.2,212.3 751.9,204.5 761.8,200.0 C771.8,195.5 781.5,194.3 791.8,193.0 C802.2,191.6 818.6,192.1 824.0,192.0" fill="none" stroke="#d6a040" stroke-width="1.2"/><path d="M655.9,232.0 C658.3,230.5 663.9,223.3 669.9,223.0 C675.9,222.6 683.9,226.1 691.9,230.0 C699.9,233.8 713.6,243.3 717.9,245.9" fill="none" stroke="#d6a040" stroke-width="1.2"/><path d="M717.9,245.9 C722.2,242.9 733.2,232.0 743.9,228.0 C754.5,224.0 768.5,222.1 781.8,222.0 C795.2,221.8 817.0,226.1 824.0,227.0" fill="none" stroke="#d6a040" stroke-width="1.2"/><path d="M719.9,243.9 C725.2,242.6 736.2,237.3 751.9,235.9 C767.5,234.6 801.8,234.1 813.8,235.9 C825.8,237.8 822.3,245.1 824.0,246.9" fill="none" stroke="#d6a040" stroke-width="1.2"/><path d="M657.9,267.9 L669.9,252.9 L699.9,251.9 L701.5,240.3 L683.9,242.9 L669.9,251.9" fill="none" stroke="#d6a040" stroke-width="1.2"/><ellipse cx="671.4" cy="312.4" rx="24.4" ry="35.6" fill="none" stroke="#d6a040" stroke-width="1.2" transform="rotate(-8 671.4 312.4)"/><ellipse cx="676.0" cy="322.0" rx="12.0" ry="20.4" fill="none" stroke="#d6a040" stroke-width="1.2"/><path d="M649.9,293.9 C652.6,291.4 660.3,281.4 665.9,278.9 C671.6,276.4 678.9,275.7 683.9,278.9 C688.9,282.1 694.6,289.4 695.9,297.9 C697.2,306.4 693.9,321.5 691.9,329.9 C689.9,338.2 688.2,344.5 683.9,347.9 C679.6,351.2 668.9,349.5 665.9,349.9" fill="none" stroke="#d6a040" stroke-width="1.2"/><path d="M747.9,243.9 C747.5,246.3 740.2,255.4 745.9,257.9 C751.5,260.4 772.8,256.9 781.8,258.9 C790.8,260.9 795.2,265.1 799.8,269.9 C804.5,274.7 808.1,284.9 809.8,287.9" fill="none" stroke="#d6a040" stroke-width="1.2"/><path d="M747.9,243.9 C751.9,245.3 764.5,248.6 771.8,251.9 C779.2,255.3 788.5,261.9 791.8,263.9" fill="none" stroke="#d6a040" stroke-width="1.2"/><path d="M710.9,269.9 C710.7,274.9 711.1,286.6 709.9,299.9 C708.7,313.2 704.9,341.5 703.9,349.9" fill="none" stroke="#d6a040" stroke-width="1.2"/><path d="M683.9,421.8 C683.9,414.8 682.2,393.5 683.9,379.8 C685.6,366.2 688.6,353.5 693.9,339.9 C699.2,326.2 707.9,308.9 715.9,297.9 C723.9,286.9 730.9,279.6 741.9,273.9 C752.9,268.3 768.1,266.3 781.8,263.9 C795.5,261.6 817.0,260.6 824.0,259.9" fill="none" stroke="#e3922e" stroke-width="1.1"/><path d="M691.9,421.8 C692.2,413.1 690.9,385.8 693.9,369.8 C696.9,353.9 704.2,338.5 709.9,325.9 C715.6,313.2 720.9,301.9 727.9,293.9 C734.9,285.9 741.2,281.9 751.9,277.9 C762.5,273.9 779.8,271.6 791.8,269.9 C803.8,268.3 818.6,268.3 824.0,267.9" fill="none" stroke="#e3922e" stroke-width="1.1"/><path d="M697.9,399.8 C698.6,393.2 698.9,372.5 701.9,359.8 C704.9,347.2 709.2,334.9 715.9,323.9 C722.5,312.9 730.9,301.9 741.9,293.9 C752.9,285.9 768.1,279.6 781.8,275.9 C795.5,272.3 817.0,272.6 824.0,271.9" fill="none" stroke="#e3922e" stroke-width="1.1"/><path d="M723.9,281.9 C725.2,287.6 728.2,305.9 731.9,315.9 C735.5,325.9 739.5,333.2 745.9,341.9 C752.2,350.5 765.8,363.5 769.8,367.8" fill="none" stroke="#e3922e" stroke-width="1.1"/><path d="M737.9,299.9 C738.5,304.2 738.5,317.5 741.9,325.9 C745.2,334.2 753.2,343.9 757.9,349.9 C762.5,355.9 767.8,359.8 769.8,361.8" fill="none" stroke="#e3922e" stroke-width="1.1"/><path d="M769.8,367.8 C773.5,363.5 782.8,350.9 791.8,341.9 C800.9,332.9 818.6,318.5 824.0,313.9" fill="none" stroke="#e3922e" stroke-width="1.1"/><path d="M767.8,361.8 C773.5,356.5 792.5,336.5 801.8,329.9 C811.2,323.2 820.3,323.2 824.0,321.9" fill="none" stroke="#e3922e" stroke-width="1.1"/><path d="M711.9,343.9 C716.9,344.2 731.9,343.2 741.9,345.9 C751.9,348.5 758.2,360.2 771.8,359.8 C785.5,359.5 815.3,346.5 824.0,343.9" fill="none" stroke="#e3922e" stroke-width="1.1"/><path d="M711.9,349.9 C717.2,349.9 733.9,347.2 743.9,349.9 C753.9,352.5 767.2,363.2 771.8,365.8" fill="none" stroke="#e3922e" stroke-width="1.1"/><ellipse cx="762.0" cy="324.0" rx="14.0" ry="17.0" fill="none" stroke="#e3922e" stroke-width="1.1"/><ellipse cx="772.0" cy="322.0" rx="40.0" ry="37.0" fill="none" stroke="#e3922e" stroke-width="1.1"/><path d="M677.9,367.8 C680.2,366.5 686.2,362.8 691.9,359.8 C697.6,356.9 708.6,351.5 711.9,349.9" fill="none" stroke="#e3922e" stroke-width="1.1"/><path d="M677.9,367.8 C678.9,370.8 680.2,379.8 683.9,385.8 C687.6,391.8 697.2,400.8 699.9,403.8" fill="none" stroke="#e3922e" stroke-width="1.1"/><path d="M711.9,379.8 C717.6,378.8 735.9,374.2 745.9,373.8 C755.9,373.5 767.5,377.2 771.8,377.8" fill="none" stroke="#e3922e" stroke-width="1.1"/><path d="M711.9,385.8 L743.9,385.8" fill="none" stroke="#e3922e" stroke-width="1.1"/><path d="M787.8,389.8 C788.2,391.8 783.8,398.5 789.8,401.8 C795.9,405.1 818.3,408.5 824.0,409.8" fill="none" stroke="#e3922e" stroke-width="1.1"/><path d="M781.8,381.8 L824.0,385.8" fill="none" stroke="#e3922e" stroke-width="1.1"/><path d="M759.8,393.8 L761.8,421.8" fill="none" stroke="#e3922e" stroke-width="1.1"/><path d="M686.9,421.8 C687.4,414.8 687.7,393.5 689.9,379.8 C692.1,366.2 695.6,352.2 699.9,339.9 C704.2,327.5 710.6,315.2 715.9,305.9 C721.2,296.6 725.2,290.2 731.9,283.9 C738.5,277.6 745.9,272.6 755.9,267.9 C765.8,263.3 780.5,258.8 791.8,255.9 C803.2,253.1 818.6,251.8 824.0,250.9" fill="none" stroke="#e8841c" stroke-width="2.4"/><path d="M686.9,421.8 C687.4,414.8 687.7,393.5 689.9,379.8 C692.1,366.2 695.6,352.2 699.9,339.9 C704.2,327.5 710.6,315.2 715.9,305.9 C721.2,296.6 725.2,290.2 731.9,283.9 C738.5,277.6 745.9,272.6 755.9,267.9 C765.8,263.3 780.5,258.8 791.8,255.9 C803.2,253.1 818.6,251.8 824.0,250.9" fill="none" stroke="#2a1206" stroke-width="1.2"/><path d="M731.9,283.9 C732.2,288.2 731.5,301.9 733.9,309.9 C736.2,317.9 741.0,325.4 745.9,331.9 C750.7,338.4 756.9,349.2 762.8,348.9 C768.8,348.5 775.3,337.0 781.8,329.9 C788.3,322.7 794.8,314.6 801.8,305.9 C808.8,297.2 820.3,282.6 824.0,277.9" fill="none" stroke="#e8841c" stroke-width="2.2"/><path d="M731.9,283.9 C732.2,288.2 731.5,301.9 733.9,309.9 C736.2,317.9 741.0,325.4 745.9,331.9 C750.7,338.4 756.9,349.2 762.8,348.9 C768.8,348.5 775.3,337.0 781.8,329.9 C788.3,322.7 794.8,314.6 801.8,305.9 C808.8,297.2 820.3,282.6 824.0,277.9" fill="none" stroke="#2a1206" stroke-width="1.1"/><path d="M699.9,341.9 C702.6,340.4 709.6,333.9 715.9,332.9 C722.2,331.9 730.0,333.2 737.9,335.9 C745.7,338.5 753.9,349.2 762.8,348.9 C771.8,348.5 781.6,337.4 791.8,333.9 C802.0,330.4 818.6,328.9 824.0,327.9" fill="none" stroke="#e8841c" stroke-width="2.2"/><path d="M699.9,341.9 C702.6,340.4 709.6,333.9 715.9,332.9 C722.2,331.9 730.0,333.2 737.9,335.9 C745.7,338.5 753.9,349.2 762.8,348.9 C771.8,348.5 781.6,337.4 791.8,333.9 C802.0,330.4 818.6,328.9 824.0,327.9" fill="none" stroke="#2a1206" stroke-width="1.1"/><path d="M762.8,348.9 C767.7,345.4 781.6,334.2 791.8,327.9 C802.0,321.5 818.6,313.7 824.0,310.9" fill="none" stroke="#e8841c" stroke-width="2.0"/><path d="M762.8,348.9 C767.7,345.4 781.6,334.2 791.8,327.9 C802.0,321.5 818.6,313.7 824.0,310.9" fill="none" stroke="#2a1206" stroke-width="1.0"/><path d="M701.9,390.8 L711.9,376.8 L747.9,363.8 L747.9,377.8 L715.9,380.8" fill="none" stroke="#e8841c" stroke-width="2.2"/><path d="M701.9,390.8 L711.9,376.8 L747.9,363.8 L747.9,377.8 L715.9,380.8" fill="none" stroke="#2a1206" stroke-width="1.1"/><path d="M780.8,361.8 C781.0,364.5 774.6,375.0 781.8,377.8 C789.0,380.7 817.0,378.7 824.0,378.8" fill="none" stroke="#e8841c" stroke-width="2.2"/><path d="M780.8,361.8 C781.0,364.5 774.6,375.0 781.8,377.8 C789.0,380.7 817.0,378.7 824.0,378.8" fill="none" stroke="#2a1206" stroke-width="1.1"/><path d="M780.8,361.8 C784.3,363.2 794.6,368.5 801.8,369.8 C809.0,371.2 820.3,369.8 824.0,369.8" fill="none" stroke="#e8841c" stroke-width="2.2"/><path d="M780.8,361.8 C784.3,363.2 794.6,368.5 801.8,369.8 C809.0,371.2 820.3,369.8 824.0,369.8" fill="none" stroke="#2a1206" stroke-width="1.1"/><path d="M753.9,373.8 C754.0,378.2 754.5,391.8 754.9,399.8 C755.2,407.8 755.7,418.1 755.9,421.8" fill="none" stroke="#e8841c" stroke-width="2.2"/><path d="M753.9,373.8 C754.0,378.2 754.5,391.8 754.9,399.8 C755.2,407.8 755.7,418.1 755.9,421.8" fill="none" stroke="#2a1206" stroke-width="1.1"/><path d="M824.0,190.0 C829.0,194.3 846.0,205.0 854.0,216.0 C862.0,227.0 868.6,241.9 872.0,255.9 C875.3,269.9 873.6,292.6 874.0,299.9" fill="none" stroke="#e3922e" stroke-width="1.2"/><path d="M824.0,227.0 C829.0,229.1 846.0,235.1 854.0,239.9 C862.0,244.8 869.0,253.3 872.0,255.9" fill="none" stroke="#e3922e" stroke-width="1.2"/><path d="M824.0,267.9 C830.7,266.6 852.3,260.3 864.0,259.9 C875.6,259.6 886.0,262.3 893.9,265.9 C901.9,269.6 908.9,279.2 911.9,281.9" fill="none" stroke="#e3922e" stroke-width="1.1"/><path d="M824.0,289.9 C830.7,287.9 852.3,280.2 864.0,277.9 C875.6,275.6 886.0,274.9 893.9,275.9 C901.9,276.9 908.9,282.6 911.9,283.9" fill="none" stroke="#e3922e" stroke-width="1.1"/><path d="M824.0,299.9 C830.7,298.2 852.6,292.2 864.0,289.9 C875.3,287.6 884.6,285.6 891.9,285.9 C899.3,286.2 902.6,287.9 907.9,291.9 C913.3,295.9 919.9,301.9 923.9,309.9 C927.9,317.9 930.6,334.9 931.9,339.9" fill="none" stroke="#e3922e" stroke-width="1.1"/><path d="M834.0,333.9 C833.8,326.5 833.2,302.9 833.0,289.9 C832.8,276.9 833.0,261.6 833.0,255.9" fill="none" stroke="#e3922e" stroke-width="1.1"/><path d="M824.0,341.9 C831.0,341.9 856.0,339.2 866.0,341.9 C876.0,344.5 879.6,349.9 884.0,357.8 C888.3,365.8 889.9,379.2 891.9,389.8 C893.9,400.5 895.3,416.5 895.9,421.8" fill="none" stroke="#e3922e" stroke-width="1.1"/><path d="M832.0,363.8 L870.0,317.9" fill="none" stroke="#e3922e" stroke-width="1.1"/><path d="M878.0,357.8 C880.6,351.2 888.3,330.2 893.9,317.9 C899.6,305.6 908.9,289.6 911.9,283.9" fill="none" stroke="#e3922e" stroke-width="1.1"/><path d="M824.0,321.9 C831.7,321.2 854.3,317.5 870.0,317.9 C885.6,318.2 907.6,320.2 917.9,323.9 C928.2,327.5 929.6,337.2 931.9,339.9" fill="none" stroke="#e3922e" stroke-width="1.1"/><path d="M923.9,309.9 C926.6,309.6 935.2,306.2 939.9,307.9 C944.6,309.6 947.9,314.6 951.9,319.9 C955.9,325.2 961.2,333.2 963.9,339.9 C966.6,346.5 967.9,353.2 967.9,359.8 C967.9,366.5 966.6,375.5 963.9,379.8 C961.2,384.2 955.2,387.8 951.9,385.8 C948.6,383.8 945.2,370.8 943.9,367.8" fill="none" stroke="#e3922e" stroke-width="1.1"/><path d="M939.9,321.9 C939.6,328.2 938.6,348.2 937.9,359.8 C937.2,371.5 936.2,386.5 935.9,391.8" fill="none" stroke="#e3922e" stroke-width="1.1"/><path d="M907.9,419.8 L977.9,369.8 L961.9,421.8" fill="none" stroke="#e3922e" stroke-width="1.1"/><path d="M935.9,421.8 L977.9,373.8" fill="none" stroke="#e3922e" stroke-width="1.1"/><path d="M824.0,393.8 L862.0,405.8" fill="none" stroke="#e3922e" stroke-width="1.1"/><path d="M824.0,273.9 C834.0,274.6 870.6,275.2 884.0,277.9 C897.3,280.6 900.6,287.9 903.9,289.9" fill="none" stroke="#e3922e" stroke-width="1.1"/><path d="M848.0,319.9 C853.3,313.6 872.3,288.9 880.0,281.9 C887.6,274.9 891.6,278.6 893.9,277.9" fill="none" stroke="#e3922e" stroke-width="1.1"/><path d="M824.0,345.9 C830.7,345.5 855.0,341.5 864.0,343.9 C873.0,346.2 873.6,346.9 878.0,359.8 C882.3,372.8 887.9,411.5 889.9,421.8" fill="none" stroke="#e3922e" stroke-width="1.1"/><path d="M824.0,250.9 C829.0,251.1 844.0,249.8 854.0,251.9 C864.0,254.1 875.0,258.9 884.0,263.9 C892.9,268.9 901.6,275.6 907.9,281.9 C914.3,288.2 918.4,295.6 921.9,301.9 C925.4,308.2 927.1,312.6 928.9,319.9 C930.7,327.2 932.2,336.9 932.9,345.9 C933.6,354.9 932.9,369.2 932.9,373.8" fill="none" stroke="#e8841c" stroke-width="2.4"/><path d="M824.0,250.9 C829.0,251.1 844.0,249.8 854.0,251.9 C864.0,254.1 875.0,258.9 884.0,263.9 C892.9,268.9 901.6,275.6 907.9,281.9 C914.3,288.2 918.4,295.6 921.9,301.9 C925.4,308.2 927.1,312.6 928.9,319.9 C930.7,327.2 932.2,336.9 932.9,345.9 C933.6,354.9 932.9,369.2 932.9,373.8" fill="none" stroke="#2a1206" stroke-width="1.2"/><path d="M824.0,278.9 C827.3,277.4 835.7,272.8 844.0,269.9 C852.3,267.1 869.0,263.3 874.0,261.9" fill="none" stroke="#e8841c" stroke-width="2.2"/><path d="M824.0,278.9 C827.3,277.4 835.7,272.8 844.0,269.9 C852.3,267.1 869.0,263.3 874.0,261.9" fill="none" stroke="#2a1206" stroke-width="1.1"/><path d="M824.0,313.9 C829.0,312.6 844.0,307.9 854.0,305.9 C864.0,303.9 875.6,302.2 884.0,301.9 C892.3,301.6 898.3,302.6 903.9,303.9 C909.6,305.2 915.6,308.9 917.9,309.9" fill="none" stroke="#e8841c" stroke-width="2.2"/><path d="M824.0,313.9 C829.0,312.6 844.0,307.9 854.0,305.9 C864.0,303.9 875.6,302.2 884.0,301.9 C892.3,301.6 898.3,302.6 903.9,303.9 C909.6,305.2 915.6,308.9 917.9,309.9" fill="none" stroke="#2a1206" stroke-width="1.1"/><path d="M824.0,327.9 L860.0,326.9 L866.0,335.9 L883.0,344.9 L886.0,359.8 L897.9,399.8" fill="none" stroke="#e8841c" stroke-width="2.2"/><path d="M824.0,327.9 L860.0,326.9 L866.0,335.9 L883.0,344.9 L886.0,359.8 L897.9,399.8" fill="none" stroke="#2a1206" stroke-width="1.1"/><path d="M928.9,315.9 C931.4,315.4 939.4,311.9 943.9,312.9 C948.4,313.9 952.9,316.7 955.9,321.9 C958.9,327.0 960.9,338.2 961.9,343.9 C962.9,349.5 961.9,353.9 961.9,355.9" fill="none" stroke="#e8841c" stroke-width="2.2"/><path d="M928.9,315.9 C931.4,315.4 939.4,311.9 943.9,312.9 C948.4,313.9 952.9,316.7 955.9,321.9 C958.9,327.0 960.9,338.2 961.9,343.9 C962.9,349.5 961.9,353.9 961.9,355.9" fill="none" stroke="#2a1206" stroke-width="1.1"/><path d="M933.9,343.9 C936.6,341.2 946.2,328.5 949.9,327.9 C953.6,327.2 954.6,334.2 955.9,339.9 C957.2,345.5 957.6,358.2 957.9,361.8" fill="none" stroke="#e8841c" stroke-width="2.0"/><path d="M933.9,343.9 C936.6,341.2 946.2,328.5 949.9,327.9 C953.6,327.2 954.6,334.2 955.9,339.9 C957.2,345.5 957.6,358.2 957.9,361.8" fill="none" stroke="#2a1206" stroke-width="1.0"/><path d="M943.9,353.9 L945.9,363.8" fill="none" stroke="#e8841c" stroke-width="1.8"/><path d="M943.9,353.9 L945.9,363.8" fill="none" stroke="#2a1206" stroke-width="0.9"/><path d="M889.9,410.8 L971.9,353.9 L943.9,421.8" fill="none" stroke="#e8841c" stroke-width="2.2"/><path d="M889.9,410.8 L971.9,353.9 L943.9,421.8" fill="none" stroke="#2a1206" stroke-width="1.1"/><path d="M899.9,421.8 L931.9,385.8" fill="none" stroke="#e8841c" stroke-width="2.0"/><path d="M899.9,421.8 L931.9,385.8" fill="none" stroke="#2a1206" stroke-width="1.0"/><path d="M824.0,371.8 C826.3,371.7 833.0,368.7 838.0,370.8 C843.0,373.0 851.3,382.5 854.0,384.8" fill="none" stroke="#e8841c" stroke-width="2.2"/><path d="M824.0,371.8 C826.3,371.7 833.0,368.7 838.0,370.8 C843.0,373.0 851.3,382.5 854.0,384.8" fill="none" stroke="#2a1206" stroke-width="1.1"/><path d="M824.0,386.8 C826.7,387.3 835.0,387.0 840.0,389.8 C845.0,392.7 851.3,398.5 854.0,403.8 C856.6,409.1 855.6,418.8 856.0,421.8" fill="none" stroke="#e8841c" stroke-width="2.2"/><path d="M824.0,386.8 C826.7,387.3 835.0,387.0 840.0,389.8 C845.0,392.7 851.3,398.5 854.0,403.8 C856.6,409.1 855.6,418.8 856.0,421.8" fill="none" stroke="#2a1206" stroke-width="1.1"/><path d="M824.0,401.8 L828.0,421.8" fill="none" stroke="#e8841c" stroke-width="2.0"/><path d="M824.0,401.8 L828.0,421.8" fill="none" stroke="#2a1206" stroke-width="1.0"/><path d="M401.9,443.0 C398.3,444.1 388.6,446.1 380.0,450.0 C371.3,453.8 357.8,460.3 350.0,466.0 C342.1,471.6 334.7,477.0 333.0,484.0 C331.3,490.9 336.8,499.3 340.0,507.9 C343.1,516.6 347.0,529.2 352.0,535.9 C357.0,542.6 362.0,545.6 370.0,547.9 C378.0,550.2 388.3,550.9 399.9,549.9 C411.6,548.9 426.9,544.9 439.9,541.9 C452.9,538.9 471.5,533.6 477.9,531.9" fill="none" stroke="#d6a040" stroke-width="1.2"/><path d="M349.0,526.9 C351.1,526.1 356.5,522.3 362.0,521.9 C367.5,521.6 375.0,524.5 382.0,524.9 C388.9,525.3 397.9,525.2 403.9,524.3 C409.9,523.5 415.6,520.7 417.9,519.9" fill="none" stroke="#d6a040" stroke-width="1.2"/><path d="M357.0,464.0 C355.6,466.3 349.8,471.0 349.0,478.0 C348.1,484.9 349.6,498.6 352.0,505.9 C354.3,513.3 361.1,519.3 363.0,521.9" fill="none" stroke="#d6a040" stroke-width="1.2"/><path d="M383.9,452.0 C382.3,453.6 376.1,459.3 374.0,462.0 C371.8,464.6 371.3,464.6 371.0,468.0 C370.6,471.3 371.1,475.6 372.0,482.0 C372.8,488.3 374.3,498.9 376.0,505.9 C377.6,512.9 381.0,520.9 382.0,523.9" fill="none" stroke="#d6a040" stroke-width="1.2"/><path d="M403.9,492.9 L417.9,492.9 L415.9,499.9" fill="none" stroke="#d6a040" stroke-width="1.2"/><path d="M415.9,499.9 L467.9,500.9 L476.9,531.9" fill="none" stroke="#d6a040" stroke-width="1.2"/><path d="M415.9,499.9 C415.9,502.3 415.3,509.9 415.9,513.9 C416.6,517.9 414.3,521.1 419.9,523.9 C425.6,526.7 444.9,529.7 449.9,530.9" fill="none" stroke="#d6a040" stroke-width="1.2"/><path d="M401.9,469.0 C401.8,471.8 400.3,479.6 400.9,485.9 C401.6,492.3 405.1,503.4 405.9,506.9" fill="none" stroke="#d6a040" stroke-width="1.2"/><path d="M401.9,443.0 L403.9,462.0" fill="none" stroke="#d6a040" stroke-width="1.2"/><path d="M373.0,422.0 L373.0,437.0 L387.9,437.0 L401.9,431.0 L401.9,422.0" fill="none" stroke="#d6a040" stroke-width="1.2"/><path d="M376.0,438.0 C380.0,438.2 390.9,440.3 399.9,439.0 C408.9,437.7 425.0,432.8 429.9,430.0 C434.8,427.2 429.6,423.3 429.5,422.0" fill="none" stroke="#d6a040" stroke-width="1.2"/><path d="M375.0,428.0 L395.9,535.9 L409.9,591.9" fill="none" stroke="#d6a040" stroke-width="1.2"/><path d="M430.9,422.0 C433.7,435.0 440.4,477.0 447.9,499.9 C455.4,522.9 471.9,547.6 475.9,559.9 C479.9,572.2 476.2,568.2 471.9,573.9 C467.5,579.5 457.2,589.5 449.9,593.9 C442.6,598.2 434.2,599.9 427.9,599.9 C421.6,599.9 414.6,594.9 411.9,593.9" fill="none" stroke="#d6a040" stroke-width="1.2"/><path d="M431.9,434.0 L459.9,509.9 L475.9,559.9" fill="none" stroke="#d6a040" stroke-width="1.2"/><path d="M396.9,540.9 C395.1,544.4 389.3,553.4 385.9,561.9 C382.6,570.4 376.3,581.9 377.0,591.9 C377.6,601.9 384.4,610.8 389.9,621.8 C395.4,632.8 404.3,649.2 409.9,657.8 C415.6,666.5 421.6,671.1 423.9,673.8" fill="none" stroke="#d6a040" stroke-width="1.2"/><path d="M455.9,506.9 C459.2,507.1 468.2,506.3 475.9,507.9 C483.5,509.6 495.5,504.9 501.9,516.9 C508.2,528.9 509.8,564.1 513.8,579.9 C517.8,595.7 523.8,606.5 525.8,611.8" fill="none" stroke="#d6a040" stroke-width="1.2"/><path d="M477.9,577.9 C480.5,577.5 487.5,575.2 493.9,575.9 C500.2,576.5 509.2,579.5 515.8,581.9 C522.5,584.2 525.2,575.9 533.8,589.9 C542.5,603.9 562.1,653.1 567.8,665.8" fill="none" stroke="#d6a040" stroke-width="1.2"/><path d="M515.8,581.9 C519.8,581.5 530.5,581.7 539.8,579.9 C549.2,578.0 566.6,572.4 572.0,570.9" fill="none" stroke="#d6a040" stroke-width="1.2"/><path d="M477.9,577.9 C479.9,581.2 487.5,590.5 489.9,597.9 C492.2,605.2 493.5,614.8 491.9,621.8 C490.2,628.8 485.9,635.2 479.9,639.8 C473.9,644.5 462.9,648.8 455.9,649.8 C448.9,650.8 440.9,646.5 437.9,645.8" fill="none" stroke="#d6a040" stroke-width="1.2"/><path d="M523.8,607.9 C522.5,612.8 520.5,628.8 515.8,637.8 C511.2,646.8 501.9,655.8 495.9,661.8 C489.9,667.8 482.5,671.8 479.9,673.8" fill="none" stroke="#d6a040" stroke-width="1.2"/><path d="M549.8,630.8 L572.0,625.8" fill="none" stroke="#d6a040" stroke-width="1.2"/><path d="M421.9,619.8 C420.6,623.5 415.3,633.8 413.9,641.8 C412.6,649.8 413.9,663.5 413.9,667.8" fill="none" stroke="#d6a040" stroke-width="1.2"/><path d="M561.8,657.8 L559.8,674.0" fill="none" stroke="#d6a040" stroke-width="1.2"/><path d="M430.9,643.8 L431.9,627.8 L437.9,609.8 L460.9,601.9 L483.9,617.8 L505.9,650.8" fill="none" stroke="#e8841c" stroke-width="2.4"/><path d="M430.9,643.8 L431.9,627.8 L437.9,609.8 L460.9,601.9 L483.9,617.8 L505.9,650.8" fill="none" stroke="#2a1206" stroke-width="1.2"/><path d="M430.9,643.8 L449.9,634.8 L452.9,627.8 L457.9,615.8" fill="none" stroke="#e8841c" stroke-width="2.2"/><path d="M430.9,643.8 L449.9,634.8 L452.9,627.8 L457.9,615.8" fill="none" stroke="#2a1206" stroke-width="1.1"/><path d="M452.9,627.8 L463.9,633.8 L471.9,647.8 L453.9,642.8 L435.9,654.8 L434.9,674.0" fill="none" stroke="#e8841c" stroke-width="2.2"/><path d="M452.9,627.8 L463.9,633.8 L471.9,647.8 L453.9,642.8 L435.9,654.8 L434.9,674.0" fill="none" stroke="#2a1206" stroke-width="1.1"/><path d="M487.9,648.8 L505.9,651.8 L537.8,654.8 L541.8,674.0" fill="none" stroke="#e8841c" stroke-width="2.4"/><path d="M487.9,648.8 L505.9,651.8 L537.8,654.8 L541.8,674.0" fill="none" stroke="#2a1206" stroke-width="1.2"/><path d="M487.9,648.8 C487.5,651.0 485.2,658.3 485.9,661.8 C486.5,665.3 490.9,668.5 491.9,669.8" fill="none" stroke="#e8841c" stroke-width="2.0"/><path d="M487.9,648.8 C487.5,651.0 485.2,658.3 485.9,661.8 C486.5,665.3 490.9,668.5 491.9,669.8" fill="none" stroke="#2a1206" stroke-width="1.0"/><path d="M462.9,652.8 L464.9,671.8" fill="none" stroke="#e8841c" stroke-width="1.8"/><path d="M462.9,652.8 L464.9,671.8" fill="none" stroke="#2a1206" stroke-width="0.9"/><path d="M471.9,674.0 L477.9,668.8 L483.9,674.0" fill="none" stroke="#e8841c" stroke-width="2.0"/><path d="M471.9,674.0 L477.9,668.8 L483.9,674.0" fill="none" stroke="#2a1206" stroke-width="1.0"/><path d="M423.9,674.0 L435.9,661.8" fill="none" stroke="#e8841c" stroke-width="2.0"/><path d="M423.9,674.0 L435.9,661.8" fill="none" stroke="#2a1206" stroke-width="1.0"/><path d="M638.9,422.0 C641.8,427.3 649.8,444.0 655.9,454.0 C662.1,464.0 669.6,471.8 675.9,482.0 C682.2,492.1 690.9,509.4 693.9,514.9" fill="none" stroke="#d6a040" stroke-width="1.2"/><path d="M693.9,514.9 C699.6,512.8 717.6,507.1 727.9,501.9 C738.2,496.8 743.5,491.9 755.9,484.0 C768.2,476.0 790.5,461.0 801.8,454.0 C813.2,447.0 820.3,444.0 824.0,442.0" fill="none" stroke="#e3922e" stroke-width="1.2"/><path d="M659.9,497.9 C660.9,497.8 662.3,496.3 665.9,496.9 C669.6,497.6 677.2,498.9 681.9,501.9 C686.6,504.9 691.9,512.8 693.9,514.9" fill="none" stroke="#d6a040" stroke-width="1.2"/><path d="M659.9,497.9 C660.3,500.6 659.9,507.3 661.9,513.9 C663.9,520.6 668.3,530.6 671.9,537.9 C675.6,545.2 679.9,551.9 683.9,557.9 C687.9,563.9 693.9,571.2 695.9,573.9" fill="none" stroke="#d6a040" stroke-width="1.2"/><path d="M572.0,570.9 C578.7,568.7 596.6,565.7 612.0,557.9 C627.3,550.1 655.3,529.6 663.9,523.9" fill="none" stroke="#d6a040" stroke-width="1.2"/><path d="M572.0,625.8 C582.0,622.2 613.3,613.2 632.0,603.9 C650.6,594.5 675.3,575.5 683.9,569.9" fill="none" stroke="#d6a040" stroke-width="1.2"/><path d="M572.0,665.8 C582.0,660.5 612.8,645.5 632.0,633.8 C651.1,622.2 677.7,602.2 686.9,595.9" fill="none" stroke="#d6a040" stroke-width="1.2"/><path d="M685.9,585.9 C686.9,591.9 689.9,607.2 691.9,621.8 C693.9,636.5 696.9,665.3 697.9,674.0" fill="none" stroke="#e3922e" stroke-width="1.2"/><path d="M683.9,553.9 C688.6,554.9 702.9,558.9 711.9,559.9 C720.9,560.9 733.5,559.9 737.9,559.9" fill="none" stroke="#e3922e" stroke-width="1.2"/><path d="M721.9,482.0 C726.9,489.3 742.5,508.8 751.9,525.9 C761.2,543.1 773.5,575.0 777.8,584.9" fill="none" stroke="#e3922e" stroke-width="1.2"/><path d="M777.8,584.9 C780.8,580.4 788.1,567.7 795.8,557.9 C803.5,548.1 819.3,531.2 824.0,525.9" fill="none" stroke="#e3922e" stroke-width="1.2"/><path d="M745.9,561.9 L771.8,585.9" fill="none" stroke="#e3922e" stroke-width="1.1"/><path d="M699.9,581.9 C708.6,588.9 738.5,616.5 751.9,623.8 C765.2,631.2 775.2,625.5 779.8,625.8" fill="none" stroke="#e3922e" stroke-width="1.1"/><path d="M719.9,621.8 L729.9,674.0" fill="none" stroke="#e3922e" stroke-width="1.1"/><path d="M671.9,674.0 L719.9,641.8" fill="none" stroke="#e3922e" stroke-width="1.1"/><path d="M779.8,609.8 L824.0,587.9" fill="none" stroke="#e3922e" stroke-width="1.1"/><path d="M711.9,456.0 C715.2,458.0 725.2,467.0 731.9,468.0 C738.5,469.0 748.5,463.0 751.9,462.0" fill="none" stroke="#e3922e" stroke-width="1.1"/><path d="M717.9,470.0 C721.2,470.6 731.9,475.0 737.9,474.0 C743.9,473.0 751.2,465.6 753.9,464.0" fill="none" stroke="#e3922e" stroke-width="1.1"/><path d="M797.8,458.0 L824.0,464.0" fill="none" stroke="#e3922e" stroke-width="1.1"/><path d="M791.8,446.0 C794.5,449.6 802.4,463.6 807.8,468.0 C813.2,472.3 821.3,471.3 824.0,472.0" fill="none" stroke="#e3922e" stroke-width="1.1"/><path d="M680.9,422.0 C681.4,428.7 680.7,449.3 683.9,462.0 C687.1,474.6 692.6,485.9 699.9,497.9 C707.2,509.9 723.2,527.9 727.9,533.9" fill="none" stroke="#e3922e" stroke-width="1.1"/><path d="M693.9,422.0 C694.9,430.0 694.9,454.3 699.9,470.0 C704.9,485.6 719.9,508.3 723.9,515.9" fill="none" stroke="#e3922e" stroke-width="1.1"/><path d="M725.9,501.9 L731.9,535.9" fill="none" stroke="#e3922e" stroke-width="1.1"/><path d="M759.8,422.0 C760.2,428.7 764.2,451.0 761.8,462.0 C759.5,473.0 748.5,483.6 745.9,487.9" fill="none" stroke="#e3922e" stroke-width="1.1"/><path d="M701.9,577.9 L747.9,579.9" fill="none" stroke="#e3922e" stroke-width="1.1"/><path d="M819.8,561.9 L824.0,565.9" fill="none" stroke="#e3922e" stroke-width="1.1"/><path d="M686.9,422.0 C687.7,428.7 688.4,448.6 691.9,462.0 C695.4,475.3 701.2,488.6 707.9,501.9 C714.6,515.3 724.5,530.6 731.9,541.9 C739.2,553.2 745.2,561.4 751.9,569.9 C758.5,578.4 768.5,589.0 771.8,592.9" fill="none" stroke="#e8841c" stroke-width="2.4"/><path d="M686.9,422.0 C687.7,428.7 688.4,448.6 691.9,462.0 C695.4,475.3 701.2,488.6 707.9,501.9 C714.6,515.3 724.5,530.6 731.9,541.9 C739.2,553.2 745.2,561.4 751.9,569.9 C758.5,578.4 768.5,589.0 771.8,592.9" fill="none" stroke="#2a1206" stroke-width="1.2"/><path d="M771.8,592.9 C776.8,590.4 793.1,583.4 801.8,577.9 C810.5,572.4 820.3,562.9 824.0,559.9" fill="none" stroke="#e8841c" stroke-width="2.4"/><path d="M771.8,592.9 C776.8,590.4 793.1,583.4 801.8,577.9 C810.5,572.4 820.3,562.9 824.0,559.9" fill="none" stroke="#2a1206" stroke-width="1.2"/><path d="M698.9,576.9 C706.7,576.5 737.0,575.4 745.9,574.9 C754.7,574.4 750.9,574.0 751.9,573.9" fill="none" stroke="#e8841c" stroke-width="2.2"/><path d="M698.9,576.9 C706.7,576.5 737.0,575.4 745.9,574.9 C754.7,574.4 750.9,574.0 751.9,573.9" fill="none" stroke="#2a1206" stroke-width="1.1"/><path d="M698.9,576.9 C701.1,582.0 705.7,598.4 711.9,607.9 C718.0,617.3 725.9,626.2 735.9,633.8 C745.9,641.5 759.8,648.7 771.8,653.8 C783.8,659.0 801.8,663.0 807.8,664.8" fill="none" stroke="#e8841c" stroke-width="2.4"/><path d="M698.9,576.9 C701.1,582.0 705.7,598.4 711.9,607.9 C718.0,617.3 725.9,626.2 735.9,633.8 C745.9,641.5 759.8,648.7 771.8,653.8 C783.8,659.0 801.8,663.0 807.8,664.8" fill="none" stroke="#2a1206" stroke-width="1.2"/><path d="M711.9,607.9 C710.6,613.5 706.6,630.8 703.9,641.8 C701.2,652.8 697.2,668.6 695.9,674.0" fill="none" stroke="#e8841c" stroke-width="2.4"/><path d="M711.9,607.9 C710.6,613.5 706.6,630.8 703.9,641.8 C701.2,652.8 697.2,668.6 695.9,674.0" fill="none" stroke="#2a1206" stroke-width="1.2"/><path d="M742.9,648.8 L745.9,674.0" fill="none" stroke="#e8841c" stroke-width="2.0"/><path d="M742.9,648.8 L745.9,674.0" fill="none" stroke="#2a1206" stroke-width="1.0"/><path d="M799.8,578.9 C801.8,582.7 808.5,593.4 811.8,601.9 C815.1,610.3 818.5,625.2 819.8,629.8" fill="none" stroke="#e8841c" stroke-width="2.2"/><path d="M799.8,578.9 C801.8,582.7 808.5,593.4 811.8,601.9 C815.1,610.3 818.5,625.2 819.8,629.8" fill="none" stroke="#2a1206" stroke-width="1.1"/><path d="M755.9,422.0 C755.5,426.0 755.5,438.7 753.9,446.0 C752.2,453.3 749.5,459.6 745.9,466.0 C742.2,472.3 732.5,479.0 731.9,484.0 C731.2,488.9 736.5,492.4 741.9,495.9 C747.2,499.4 760.2,503.4 763.8,504.9" fill="none" stroke="#e8841c" stroke-width="2.2"/><path d="M755.9,422.0 C755.5,426.0 755.5,438.7 753.9,446.0 C752.2,453.3 749.5,459.6 745.9,466.0 C742.2,472.3 732.5,479.0 731.9,484.0 C731.2,488.9 736.5,492.4 741.9,495.9 C747.2,499.4 760.2,503.4 763.8,504.9" fill="none" stroke="#2a1206" stroke-width="1.1"/><path d="M735.9,512.9 L747.9,507.9" fill="none" stroke="#111" stroke-width="2.0"/><path d="M735.9,512.9 C738.9,513.4 744.5,516.1 753.9,515.9 C763.2,515.8 783.8,511.9 791.8,511.9 C799.8,511.9 799.0,513.6 801.8,515.9 C804.6,518.3 807.6,524.3 808.8,525.9" fill="none" stroke="#111" stroke-width="2.0"/><path d="M753.9,515.9 L749.9,532.9 L769.8,539.9 L805.8,523.9" fill="none" stroke="#111" stroke-width="2.0"/><path d="M753.9,525.9 C758.5,524.9 774.2,521.3 781.8,519.9 C789.5,518.6 796.8,518.3 799.8,517.9" fill="none" stroke="#111" stroke-width="1.8"/><path d="M771.8,527.9 L769.8,538.9" fill="none" stroke="#111" stroke-width="1.6"/><path d="M779.8,521.9 C780.7,521.3 783.2,517.9 784.8,517.9 C786.5,517.9 789.0,521.3 789.8,521.9" fill="none" stroke="#111" stroke-width="1.6"/><path d="M948.9,422.0 C946.2,426.7 938.2,441.3 932.9,450.0 C927.6,458.6 921.6,467.6 916.9,474.0 C912.3,480.3 909.9,485.3 904.9,487.9 C899.9,490.6 889.9,489.6 886.9,489.9" fill="none" stroke="#e3922e" stroke-width="1.1"/><path d="M980.9,555.9 C975.5,560.2 959.2,571.5 948.9,581.9 C938.6,592.2 928.9,602.5 918.9,617.8 C908.9,633.2 893.9,664.6 888.9,674.0" fill="none" stroke="#e3922e" stroke-width="1.1"/><path d="M944.9,553.9 C939.9,559.6 924.3,576.2 914.9,587.9 C905.6,599.5 897.6,609.5 888.9,623.8 C880.3,638.2 867.3,665.6 863.0,674.0" fill="none" stroke="#e3922e" stroke-width="1.1"/><path d="M908.9,639.8 C915.6,636.5 935.6,627.8 948.9,619.8 C962.2,611.8 978.9,600.5 988.9,591.9 C998.9,583.2 1005.5,571.9 1008.9,567.9" fill="none" stroke="#e3922e" stroke-width="1.1"/><path d="M939.9,422.0 C937.2,426.8 929.2,442.2 923.9,451.0 C918.6,459.8 912.6,468.6 907.9,475.0 C903.3,481.3 900.9,486.3 895.9,488.9 C890.9,491.6 881.0,490.6 878.0,490.9" fill="none" stroke="#e3922e" stroke-width="1.1"/><path d="M971.9,556.9 C966.6,561.2 950.2,572.5 939.9,582.9 C929.6,593.2 919.9,603.7 909.9,618.8 C899.9,634.0 885.0,664.8 880.0,674.0" fill="none" stroke="#e3922e" stroke-width="1.1"/><path d="M935.9,554.9 C930.9,560.6 915.3,577.2 905.9,588.9 C896.6,600.5 888.6,610.6 880.0,624.8 C871.3,639.0 858.3,665.8 854.0,674.0" fill="none" stroke="#e3922e" stroke-width="1.1"/><path d="M899.9,640.8 C906.6,637.5 926.6,628.8 939.9,620.8 C953.2,612.8 969.9,601.5 979.9,592.9 C989.9,584.2 996.5,572.9 999.9,568.9" fill="none" stroke="#e3922e" stroke-width="1.1"/><path d="M959.9,422.0 C957.2,428.7 950.6,451.0 943.9,462.0 C937.2,473.0 928.2,480.6 919.9,487.9 C911.6,495.3 898.3,502.9 893.9,505.9" fill="none" stroke="#e3922e" stroke-width="1.1"/><path d="M824.0,452.0 C830.7,451.6 850.6,452.3 864.0,450.0 C877.3,447.6 897.3,440.0 903.9,438.0" fill="none" stroke="#e3922e" stroke-width="1.1"/><path d="M824.0,468.0 C829.0,467.0 842.3,465.6 854.0,462.0 C865.6,458.3 887.3,448.6 893.9,446.0" fill="none" stroke="#e3922e" stroke-width="1.1"/><path d="M824.0,485.9 L836.0,499.9" fill="none" stroke="#e3922e" stroke-width="1.1"/><path d="M824.0,513.9 C831.7,508.9 858.0,493.3 870.0,484.0 C882.0,474.6 891.6,462.3 895.9,458.0" fill="none" stroke="#e3922e" stroke-width="1.1"/><path d="M884.0,497.9 C887.9,499.3 899.3,505.3 907.9,505.9 C916.6,506.6 926.6,504.3 935.9,501.9 C945.2,499.6 959.2,493.6 963.9,491.9" fill="none" stroke="#e3922e" stroke-width="1.1"/><path d="M887.9,505.9 C887.3,511.9 886.6,528.6 884.0,541.9 C881.3,555.2 874.0,578.5 872.0,585.9" fill="none" stroke="#e3922e" stroke-width="1.1"/><path d="M893.9,466.0 C897.3,477.3 906.9,519.6 913.9,533.9 C920.9,548.2 932.2,548.9 935.9,551.9" fill="none" stroke="#e3922e" stroke-width="1.1"/><path d="M852.0,615.8 C860.6,611.2 883.0,596.9 903.9,587.9 C924.9,578.9 957.6,563.9 977.9,561.9 C998.2,559.9 1017.8,573.5 1025.8,575.9" fill="none" stroke="#e3922e" stroke-width="1.1"/><path d="M963.9,561.9 C966.2,563.9 974.5,555.2 977.9,573.9 C981.2,592.6 982.9,657.3 983.9,674.0" fill="none" stroke="#e3922e" stroke-width="1.1"/><path d="M983.9,573.9 C986.2,578.5 994.5,585.2 997.9,601.9 C1001.2,618.5 1002.9,662.0 1003.9,674.0" fill="none" stroke="#e3922e" stroke-width="1.1"/><path d="M1011.8,569.9 C1012.5,578.5 1015.8,604.5 1015.8,621.8 C1015.8,639.2 1012.5,665.3 1011.8,674.0" fill="none" stroke="#e3922e" stroke-width="1.1"/><path d="M943.9,577.9 C945.9,581.9 951.9,585.8 955.9,601.9 C959.9,617.9 965.9,662.0 967.9,674.0" fill="none" stroke="#e3922e" stroke-width="1.1"/><path d="M824.0,621.8 C830.7,616.8 850.6,602.5 864.0,591.9 C877.3,581.2 890.6,574.2 903.9,557.9 C917.3,541.6 937.2,504.6 943.9,493.9" fill="none" stroke="#e3922e" stroke-width="1.1"/><path d="M824.0,661.8 C828.7,659.8 845.0,651.2 852.0,649.8 C859.0,648.5 863.6,653.1 866.0,653.8" fill="none" stroke="#e3922e" stroke-width="1.1"/><path d="M917.9,557.9 C934.9,556.9 1001.9,548.9 1019.8,551.9 C1037.8,554.9 1024.8,571.9 1025.8,575.9" fill="none" stroke="#e3922e" stroke-width="1.1"/><path d="M868.0,674.0 C877.3,662.0 907.9,621.2 923.9,601.9 C939.9,582.5 957.2,565.2 963.9,557.9" fill="none" stroke="#e3922e" stroke-width="1.1"/><path d="M824.0,446.0 C826.7,445.0 835.0,443.3 840.0,440.0 C845.0,436.7 851.3,429.0 854.0,426.0 C856.6,423.0 855.6,422.7 856.0,422.0" fill="none" stroke="#e8841c" stroke-width="2.2"/><path d="M824.0,446.0 C826.7,445.0 835.0,443.3 840.0,440.0 C845.0,436.7 851.3,429.0 854.0,426.0 C856.6,423.0 855.6,422.7 856.0,422.0" fill="none" stroke="#2a1206" stroke-width="1.1"/><path d="M895.9,422.0 C896.9,424.0 900.6,430.7 901.9,434.0 C903.3,437.3 904.6,438.3 903.9,442.0 C903.3,445.6 901.6,452.5 897.9,456.0 C894.3,459.5 884.6,461.8 882.0,463.0" fill="none" stroke="#e8841c" stroke-width="2.2"/><path d="M895.9,422.0 C896.9,424.0 900.6,430.7 901.9,434.0 C903.3,437.3 904.6,438.3 903.9,442.0 C903.3,445.6 901.6,452.5 897.9,456.0 C894.3,459.5 884.6,461.8 882.0,463.0" fill="none" stroke="#2a1206" stroke-width="1.1"/><path d="M943.9,422.0 C941.2,426.3 933.2,439.7 927.9,448.0 C922.6,456.3 916.6,465.6 911.9,472.0 C907.3,478.3 904.9,483.3 899.9,485.9 C894.9,488.6 885.3,488.6 882.0,487.9 C878.6,487.3 880.3,483.0 880.0,482.0" fill="none" stroke="#e8841c" stroke-width="2.4"/><path d="M943.9,422.0 C941.2,426.3 933.2,439.7 927.9,448.0 C922.6,456.3 916.6,465.6 911.9,472.0 C907.3,478.3 904.9,483.3 899.9,485.9 C894.9,488.6 885.3,488.6 882.0,487.9 C878.6,487.3 880.3,483.0 880.0,482.0" fill="none" stroke="#2a1206" stroke-width="1.2"/><path d="M880.0,482.0 L877.0,513.9 L884.0,533.9" fill="none" stroke="#e8841c" stroke-width="2.2"/><path d="M880.0,482.0 L877.0,513.9 L884.0,533.9" fill="none" stroke="#2a1206" stroke-width="1.1"/><path d="M919.9,464.0 C923.3,465.0 933.2,466.3 939.9,470.0 C946.6,473.6 956.6,483.3 959.9,485.9" fill="none" stroke="#e8841c" stroke-width="2.2"/><path d="M919.9,464.0 C923.3,465.0 933.2,466.3 939.9,470.0 C946.6,473.6 956.6,483.3 959.9,485.9" fill="none" stroke="#2a1206" stroke-width="1.1"/><path d="M934.9,440.0 L937.9,468.0" fill="none" stroke="#e8841c" stroke-width="2.0"/><path d="M934.9,440.0 L937.9,468.0" fill="none" stroke="#2a1206" stroke-width="1.0"/><path d="M824.0,559.9 C828.3,557.2 841.3,551.2 850.0,543.9 C858.6,536.6 871.6,520.6 876.0,515.9" fill="none" stroke="#e8841c" stroke-width="2.4"/><path d="M824.0,559.9 C828.3,557.2 841.3,551.2 850.0,543.9 C858.6,536.6 871.6,520.6 876.0,515.9" fill="none" stroke="#2a1206" stroke-width="1.2"/><path d="M884.0,533.9 C889.3,530.2 904.9,519.6 915.9,511.9 C926.9,504.3 944.2,491.9 949.9,487.9" fill="none" stroke="#e8841c" stroke-width="2.4"/><path d="M884.0,533.9 C889.3,530.2 904.9,519.6 915.9,511.9 C926.9,504.3 944.2,491.9 949.9,487.9" fill="none" stroke="#2a1206" stroke-width="1.2"/><path d="M834.0,591.9 C839.0,585.2 855.6,561.6 864.0,551.9 C872.3,542.2 880.6,536.9 884.0,533.9" fill="none" stroke="#e8841c" stroke-width="2.4"/><path d="M834.0,591.9 C839.0,585.2 855.6,561.6 864.0,551.9 C872.3,542.2 880.6,536.9 884.0,533.9" fill="none" stroke="#2a1206" stroke-width="1.2"/><path d="M959.9,485.9 C957.2,489.6 948.6,500.6 943.9,507.9 C939.2,515.3 936.2,521.4 931.9,529.9 C927.6,538.4 920.3,554.1 917.9,558.9" fill="none" stroke="#e8841c" stroke-width="2.4"/><path d="M959.9,485.9 C957.2,489.6 948.6,500.6 943.9,507.9 C939.2,515.3 936.2,521.4 931.9,529.9 C927.6,538.4 920.3,554.1 917.9,558.9" fill="none" stroke="#2a1206" stroke-width="1.2"/><path d="M943.9,507.9 L948.9,548.9" fill="none" stroke="#e8841c" stroke-width="2.0"/><path d="M943.9,507.9 L948.9,548.9" fill="none" stroke="#2a1206" stroke-width="1.0"/><path d="M917.9,553.9 L941.9,549.9 L975.9,548.9 L981.9,552.9 L1019.8,546.9 L1027.8,573.9 L1029.8,621.8 L1033.8,674.0" fill="none" stroke="#e8841c" stroke-width="2.4"/><path d="M917.9,553.9 L941.9,549.9 L975.9,548.9 L981.9,552.9 L1019.8,546.9 L1027.8,573.9 L1029.8,621.8 L1033.8,674.0" fill="none" stroke="#2a1206" stroke-width="1.2"/><path d="M975.9,553.9 C970.5,558.2 954.2,569.5 943.9,579.9 C933.6,590.2 923.9,600.2 913.9,615.8 C903.9,631.5 888.9,664.3 884.0,674.0" fill="none" stroke="#e8841c" stroke-width="2.4"/><path d="M975.9,553.9 C970.5,558.2 954.2,569.5 943.9,579.9 C933.6,590.2 923.9,600.2 913.9,615.8 C903.9,631.5 888.9,664.3 884.0,674.0" fill="none" stroke="#2a1206" stroke-width="1.2"/><path d="M939.9,551.9 C934.9,557.6 919.3,574.2 909.9,585.9 C900.6,597.5 892.6,607.2 884.0,621.8 C875.3,636.5 862.3,665.3 858.0,674.0" fill="none" stroke="#e8841c" stroke-width="2.4"/><path d="M939.9,551.9 C934.9,557.6 919.3,574.2 909.9,585.9 C900.6,597.5 892.6,607.2 884.0,621.8 C875.3,636.5 862.3,665.3 858.0,674.0" fill="none" stroke="#2a1206" stroke-width="1.2"/><path d="M903.9,637.8 C910.6,634.5 930.6,625.8 943.9,617.8 C957.2,609.8 973.9,598.5 983.9,589.9 C993.9,581.2 998.5,569.9 1003.9,565.9 C1009.2,561.9 1012.8,563.2 1015.8,565.9 C1018.8,568.5 1020.5,572.5 1021.8,581.9 C1023.2,591.2 1023.5,606.9 1023.8,621.8 C1024.2,636.8 1023.8,663.5 1023.8,671.8" fill="none" stroke="#e8841c" stroke-width="2.4"/><path d="M903.9,637.8 C910.6,634.5 930.6,625.8 943.9,617.8 C957.2,609.8 973.9,598.5 983.9,589.9 C993.9,581.2 998.5,569.9 1003.9,565.9 C1009.2,561.9 1012.8,563.2 1015.8,565.9 C1018.8,568.5 1020.5,572.5 1021.8,581.9 C1023.2,591.2 1023.5,606.9 1023.8,621.8 C1024.2,636.8 1023.8,663.5 1023.8,671.8" fill="none" stroke="#2a1206" stroke-width="1.2"/><path d="M824.0,561.9 C825.3,564.6 830.3,572.2 832.0,577.9 C833.7,583.5 833.7,592.9 834.0,595.9" fill="none" stroke="#e8841c" stroke-width="2.2"/><path d="M824.0,561.9 C825.3,564.6 830.3,572.2 832.0,577.9 C833.7,583.5 833.7,592.9 834.0,595.9" fill="none" stroke="#2a1206" stroke-width="1.1"/><path d="M942.9,659.8 L942.9,674.0" fill="none" stroke="#e8841c" stroke-width="1.8"/><path d="M942.9,659.8 L942.9,674.0" fill="none" stroke="#2a1206" stroke-width="0.9"/><path d="M413.9,736.0 C415.6,738.3 420.3,746.3 423.9,749.9 C427.6,753.6 431.6,757.4 435.9,757.9 C440.2,758.4 445.9,756.3 449.9,752.9 C453.9,749.6 458.2,740.4 459.9,737.9" fill="none" stroke="#d6a040" stroke-width="1.1"/><path d="M412.9,751.9 C414.8,753.9 419.9,760.6 423.9,763.9 C427.9,767.3 432.2,771.9 436.9,771.9 C441.6,771.9 448.1,767.6 451.9,763.9 C455.7,760.3 458.6,752.3 459.9,749.9" fill="none" stroke="#d6a040" stroke-width="1.1"/><path d="M445.9,769.9 C448.9,772.4 456.6,782.6 463.9,784.9 C471.2,787.2 483.2,785.7 489.9,783.9 C496.5,782.1 497.2,780.9 503.9,773.9 C510.5,766.9 525.5,747.3 529.8,741.9" fill="none" stroke="#d6a040" stroke-width="1.1"/><path d="M443.9,753.9 C447.2,756.9 456.9,768.8 463.9,771.9 C470.9,775.1 479.2,774.6 485.9,772.9 C492.5,771.3 496.5,767.4 503.9,761.9 C511.2,756.4 522.2,745.6 529.8,739.9 C537.5,734.3 546.5,730.0 549.8,728.0" fill="none" stroke="#d6a040" stroke-width="1.1"/><path d="M499.9,779.9 L572.0,813.9" fill="none" stroke="#d6a040" stroke-width="1.1"/><path d="M505.9,767.9 L572.0,803.9" fill="none" stroke="#d6a040" stroke-width="1.1"/><path d="M485.9,745.9 C486.9,742.3 487.9,730.3 491.9,724.0 C495.9,717.6 505.5,710.6 509.8,708.0 C514.2,705.3 516.5,708.0 517.8,708.0" fill="none" stroke="#d6a040" stroke-width="1.1"/><path d="M557.8,674.0 C556.5,677.7 554.5,689.3 549.8,696.0 C545.2,702.6 538.2,707.6 529.8,714.0 C521.5,720.3 504.9,730.6 499.9,734.0" fill="none" stroke="#d6a040" stroke-width="1.1"/><path d="M517.8,743.9 C522.2,742.3 534.8,736.9 543.8,734.0 C552.8,731.0 567.3,727.3 572.0,726.0" fill="none" stroke="#d6a040" stroke-width="1.1"/><path d="M558.8,831.9 L572.0,847.9" fill="none" stroke="#d6a040" stroke-width="1.1"/><path d="M431.9,674.0 C430.6,678.0 422.6,690.7 423.9,698.0 C425.2,705.3 433.9,714.0 439.9,718.0 C445.9,722.0 453.9,723.3 459.9,722.0 C465.9,720.6 473.2,712.0 475.9,710.0" fill="none" stroke="#d6a040" stroke-width="1.1"/><path d="M435.9,682.0 C435.2,685.0 429.9,696.0 431.9,700.0 C433.9,704.0 441.2,704.3 447.9,706.0 C454.6,707.6 464.9,712.0 471.9,710.0 C478.9,708.0 486.9,696.6 489.9,694.0" fill="none" stroke="#d6a040" stroke-width="1.1"/><path d="M459.9,674.0 C461.9,677.3 467.9,688.0 471.9,694.0 C475.9,700.0 483.2,703.3 483.9,710.0 C484.5,716.6 477.2,730.0 475.9,734.0" fill="none" stroke="#d6a040" stroke-width="1.1"/><path d="M519.8,698.0 C516.5,699.3 504.9,700.0 499.9,706.0 C494.9,712.0 491.5,729.3 489.9,734.0" fill="none" stroke="#d6a040" stroke-width="1.1"/><path d="M531.8,674.0 C534.8,683.3 551.8,718.0 549.8,730.0 C547.8,741.9 524.8,743.3 519.8,745.9" fill="none" stroke="#d6a040" stroke-width="1.1"/><path d="M425.9,674.0 L418.9,685.0 L427.9,704.0 L435.9,717.0 L453.9,717.0 L463.9,703.0 L485.9,684.0 L485.9,674.0" fill="none" stroke="#e8841c" stroke-width="2.4"/><path d="M425.9,674.0 L418.9,685.0 L427.9,704.0 L435.9,717.0 L453.9,717.0 L463.9,703.0 L485.9,684.0 L485.9,674.0" fill="none" stroke="#2a1206" stroke-width="1.2"/><path d="M439.9,674.0 C439.6,676.0 436.2,682.3 437.9,686.0 C439.6,689.7 444.7,693.2 449.9,696.0 C455.1,698.8 465.7,701.8 468.9,703.0" fill="none" stroke="#e8841c" stroke-width="2.2"/><path d="M439.9,674.0 C439.6,676.0 436.2,682.3 437.9,686.0 C439.6,689.7 444.7,693.2 449.9,696.0 C455.1,698.8 465.7,701.8 468.9,703.0" fill="none" stroke="#2a1206" stroke-width="1.1"/><path d="M468.9,674.0 C469.4,674.8 468.7,677.7 471.9,679.0 C475.0,680.3 485.2,681.5 487.9,682.0" fill="none" stroke="#e8841c" stroke-width="2.2"/><path d="M468.9,674.0 C469.4,674.8 468.7,677.7 471.9,679.0 C475.0,680.3 485.2,681.5 487.9,682.0" fill="none" stroke="#2a1206" stroke-width="1.1"/><path d="M415.9,694.0 L408.9,710.0 L419.9,728.0 L429.9,734.0 L443.9,730.0 L451.9,716.0" fill="none" stroke="#e8841c" stroke-width="2.4"/><path d="M415.9,694.0 L408.9,710.0 L419.9,728.0 L429.9,734.0 L443.9,730.0 L451.9,716.0" fill="none" stroke="#2a1206" stroke-width="1.2"/><path d="M439.9,732.0 C442.6,735.1 450.6,747.3 455.9,750.9 C461.2,754.6 466.9,753.8 471.9,753.9 C476.9,754.1 479.5,754.6 485.9,751.9 C492.2,749.3 502.5,742.9 509.8,737.9 C517.2,733.0 523.5,726.8 529.8,722.0 C536.2,717.1 545.8,717.0 547.8,709.0 C549.8,701.0 542.8,679.8 541.8,674.0" fill="none" stroke="#e8841c" stroke-width="2.4"/><path d="M439.9,732.0 C442.6,735.1 450.6,747.3 455.9,750.9 C461.2,754.6 466.9,753.8 471.9,753.9 C476.9,754.1 479.5,754.6 485.9,751.9 C492.2,749.3 502.5,742.9 509.8,737.9 C517.2,733.0 523.5,726.8 529.8,722.0 C536.2,717.1 545.8,717.0 547.8,709.0 C549.8,701.0 542.8,679.8 541.8,674.0" fill="none" stroke="#2a1206" stroke-width="1.2"/><path d="M509.8,729.0 C514.5,726.8 529.5,717.3 537.8,716.0 C546.2,714.6 554.1,719.6 559.8,721.0 C565.5,722.3 570.0,723.5 572.0,724.0" fill="none" stroke="#e8841c" stroke-width="2.2"/><path d="M509.8,729.0 C514.5,726.8 529.5,717.3 537.8,716.0 C546.2,714.6 554.1,719.6 559.8,721.0 C565.5,722.3 570.0,723.5 572.0,724.0" fill="none" stroke="#2a1206" stroke-width="1.1"/><path d="M559.8,720.0 L572.0,712.0" fill="none" stroke="#e8841c" stroke-width="2.0"/><path d="M559.8,720.0 L572.0,712.0" fill="none" stroke="#2a1206" stroke-width="1.0"/><path d="M487.9,751.9 L519.8,769.9 L541.8,783.9 L572.0,797.9" fill="none" stroke="#e8841c" stroke-width="2.4"/><path d="M487.9,751.9 L519.8,769.9 L541.8,783.9 L572.0,797.9" fill="none" stroke="#2a1206" stroke-width="1.2"/><path d="M541.8,783.9 C543.2,788.9 547.0,806.4 549.8,813.9 C552.6,821.4 555.1,826.2 558.8,828.9 C562.5,831.5 569.8,829.7 572.0,829.9" fill="none" stroke="#e8841c" stroke-width="2.2"/><path d="M541.8,783.9 C543.2,788.9 547.0,806.4 549.8,813.9 C552.6,821.4 555.1,826.2 558.8,828.9 C562.5,831.5 569.8,829.7 572.0,829.9" fill="none" stroke="#2a1206" stroke-width="1.1"/><path d="M481.9,717.0 C483.9,713.5 489.2,701.5 493.9,696.0 C498.5,690.5 505.5,686.3 509.8,684.0 C514.2,681.7 518.2,682.3 519.8,682.0" fill="none" stroke="#e8841c" stroke-width="2.2"/><path d="M481.9,717.0 C483.9,713.5 489.2,701.5 493.9,696.0 C498.5,690.5 505.5,686.3 509.8,684.0 C514.2,681.7 518.2,682.3 519.8,682.0" fill="none" stroke="#2a1206" stroke-width="1.1"/><path d="M495.9,674.0 C498.2,675.0 505.9,678.7 509.8,680.0 C513.8,681.3 518.2,681.7 519.8,682.0" fill="none" stroke="#e8841c" stroke-width="2.0"/><path d="M495.9,674.0 C498.2,675.0 505.9,678.7 509.8,680.0 C513.8,681.3 518.2,681.7 519.8,682.0" fill="none" stroke="#2a1206" stroke-width="1.0"/><path d="M622.0,704.0 C626.3,701.3 639.6,693.0 647.9,688.0 C656.3,683.0 667.9,676.3 671.9,674.0" fill="none" stroke="#e3922e" stroke-width="1.1"/><path d="M572.0,722.0 L622.0,702.0 L671.9,737.9 L687.9,747.9" fill="none" stroke="#e3922e" stroke-width="1.1"/><path d="M572.0,736.9 C578.0,738.3 600.0,741.1 608.0,744.9 C616.0,748.8 617.3,754.4 620.0,759.9 C622.6,765.4 625.3,770.9 624.0,777.9 C622.6,784.9 618.3,795.2 612.0,801.9 C605.6,808.6 592.7,816.2 586.0,817.9 C579.3,819.6 574.3,812.9 572.0,811.9" fill="none" stroke="#e3922e" stroke-width="1.1"/><path d="M572.0,743.9 C578.3,744.6 601.5,743.6 610.0,747.9 C618.5,752.3 621.6,762.3 623.0,769.9 C624.3,777.6 624.8,787.2 618.0,793.9 C611.1,800.6 588.0,807.2 582.0,809.9" fill="none" stroke="#e3922e" stroke-width="1.1"/><path d="M572.0,839.9 C582.0,840.5 605.6,845.0 632.0,843.9 C658.3,842.7 713.6,834.7 729.9,832.9" fill="none" stroke="#e3922e" stroke-width="1.1"/><path d="M572.0,847.9 C585.3,847.9 632.0,848.9 651.9,847.9 C671.9,846.9 685.2,842.9 691.9,841.9" fill="none" stroke="#e3922e" stroke-width="1.1"/><path d="M699.9,674.0 C700.9,676.0 700.6,679.3 705.9,686.0 C711.2,692.7 724.2,706.0 731.9,714.0 C739.5,722.0 745.2,726.6 751.9,734.0 C758.5,741.3 765.2,750.9 771.8,757.9 C778.5,764.9 783.1,767.9 791.8,775.9 C800.5,783.9 818.6,800.9 824.0,805.9" fill="none" stroke="#e3922e" stroke-width="1.1"/><path d="M791.8,674.0 C791.5,684.0 788.5,705.0 789.8,734.0 C791.2,762.9 795.8,828.5 799.8,847.9 C803.8,867.2 811.1,854.9 813.8,849.9 C816.5,844.9 816.8,833.9 815.8,817.9 C814.8,801.9 806.4,771.3 807.8,753.9 C809.2,736.6 821.3,720.6 824.0,714.0" fill="none" stroke="#e3922e" stroke-width="1.1"/><path d="M725.9,674.0 L743.9,726.0" fill="none" stroke="#e3922e" stroke-width="1.1"/><path d="M801.8,674.0 C801.2,680.0 794.5,696.6 797.8,710.0 C801.2,723.3 817.8,746.6 821.8,753.9" fill="none" stroke="#e3922e" stroke-width="1.1"/><path d="M677.9,674.0 L691.9,714.0 L699.9,674.0" fill="none" stroke="#e3922e" stroke-width="1.1"/><path d="M691.9,753.9 C693.6,759.3 701.9,773.9 701.9,785.9 C701.9,797.9 693.6,819.2 691.9,825.9" fill="none" stroke="#e3922e" stroke-width="1.5"/><path d="M805.8,857.9 C808.1,857.2 816.8,861.2 819.8,853.9 C822.8,846.5 823.3,820.5 824.0,813.9" fill="none" stroke="#e3922e" stroke-width="1.1"/><path d="M734.9,924.8 L824.0,924.8" fill="none" stroke="#f0a060" stroke-width="1.2"/><path d="M572.0,712.0 L592.0,703.0 L619.0,697.0 L647.9,718.0 L671.9,734.0 L688.9,743.9" fill="none" stroke="#e8841c" stroke-width="2.4"/><path d="M572.0,712.0 L592.0,703.0 L619.0,697.0 L647.9,718.0 L671.9,734.0 L688.9,743.9" fill="none" stroke="#2a1206" stroke-width="1.2"/><path d="M572.0,725.0 C577.7,726.1 598.3,727.8 606.0,732.0 C613.6,736.1 615.6,743.6 618.0,749.9 C620.3,756.3 621.0,763.3 620.0,769.9 C619.0,776.6 615.6,784.9 612.0,789.9 C608.3,794.9 603.3,798.1 598.0,799.9 C592.7,801.7 584.3,801.2 580.0,800.9 C575.7,800.6 573.3,798.4 572.0,797.9" fill="none" stroke="#e8841c" stroke-width="2.4"/><path d="M572.0,725.0 C577.7,726.1 598.3,727.8 606.0,732.0 C613.6,736.1 615.6,743.6 618.0,749.9 C620.3,756.3 621.0,763.3 620.0,769.9 C619.0,776.6 615.6,784.9 612.0,789.9 C608.3,794.9 603.3,798.1 598.0,799.9 C592.7,801.7 584.3,801.2 580.0,800.9 C575.7,800.6 573.3,798.4 572.0,797.9" fill="none" stroke="#2a1206" stroke-width="1.2"/><path d="M688.9,743.9 C690.4,747.6 695.9,756.9 697.9,765.9 C699.9,774.9 700.4,792.6 700.9,797.9" fill="none" stroke="#e8841c" stroke-width="2.0"/><path d="M688.9,743.9 C690.4,747.6 695.9,756.9 697.9,765.9 C699.9,774.9 700.4,792.6 700.9,797.9" fill="none" stroke="#2a1206" stroke-width="1.0"/><path d="M572.0,829.9 C578.7,830.4 597.0,832.2 612.0,832.9 C627.0,833.5 642.1,834.4 661.9,833.9 C681.7,833.4 719.4,830.5 730.9,829.9" fill="none" stroke="#e8841c" stroke-width="2.4"/><path d="M572.0,829.9 C578.7,830.4 597.0,832.2 612.0,832.9 C627.0,833.5 642.1,834.4 661.9,833.9 C681.7,833.4 719.4,830.5 730.9,829.9" fill="none" stroke="#2a1206" stroke-width="1.2"/><path d="M730.9,829.9 C731.4,825.9 731.7,818.6 733.9,805.9 C736.0,793.2 740.7,769.3 743.9,753.9 C747.0,738.6 752.5,727.3 752.9,714.0 C753.2,700.6 747.0,680.7 745.9,674.0" fill="none" stroke="#e8841c" stroke-width="2.4"/><path d="M730.9,829.9 C731.4,825.9 731.7,818.6 733.9,805.9 C736.0,793.2 740.7,769.3 743.9,753.9 C747.0,738.6 752.5,727.3 752.9,714.0 C753.2,700.6 747.0,680.7 745.9,674.0" fill="none" stroke="#2a1206" stroke-width="1.2"/><path d="M671.9,734.0 C674.3,729.0 681.6,714.0 685.9,704.0 C690.2,694.0 695.9,679.0 697.9,674.0" fill="none" stroke="#e8841c" stroke-width="2.4"/><path d="M671.9,734.0 C674.3,729.0 681.6,714.0 685.9,704.0 C690.2,694.0 695.9,679.0 697.9,674.0" fill="none" stroke="#2a1206" stroke-width="1.2"/><path d="M752.9,714.0 C756.0,720.6 765.3,744.3 771.8,753.9 C778.3,763.6 783.1,763.9 791.8,771.9 C800.5,779.9 818.6,796.9 824.0,801.9" fill="none" stroke="#e8841c" stroke-width="2.4"/><path d="M752.9,714.0 C756.0,720.6 765.3,744.3 771.8,753.9 C778.3,763.6 783.1,763.9 791.8,771.9 C800.5,779.9 818.6,796.9 824.0,801.9" fill="none" stroke="#2a1206" stroke-width="1.2"/><path d="M630.0,859.9 L647.9,847.9 L655.9,835.9 L664.9,831.9 L667.9,819.9 L699.9,809.9" fill="none" stroke="#111" stroke-width="2.4"/><path d="M663.9,831.9 C668.6,830.2 685.9,825.9 691.9,821.9 C697.9,817.9 698.6,810.2 699.9,807.9" fill="none" stroke="#111" stroke-width="2.4"/><path d="M630.0,859.9 C633.6,860.2 643.9,860.2 651.9,861.8 C659.9,863.5 669.6,867.7 677.9,869.8 C686.2,872.0 694.2,874.2 701.9,874.8 C709.6,875.5 717.9,874.5 723.9,873.8 C729.9,873.2 735.5,871.3 737.9,870.8" fill="none" stroke="#111" stroke-width="2.4"/><path d="M677.9,811.9 L699.9,797.9 L731.9,809.9 L751.9,811.9 L765.8,829.9 L795.8,831.9" fill="none" stroke="#111" stroke-width="2.4"/><path d="M695.9,828.9 C700.6,827.7 714.2,823.5 723.9,821.9 C733.5,820.2 748.9,819.4 753.9,818.9" fill="none" stroke="#111" stroke-width="2.4"/><path d="M695.9,828.9 C696.6,831.7 697.2,840.0 699.9,845.9 C702.6,851.7 707.6,859.4 711.9,863.8 C716.2,868.3 723.5,871.3 725.9,872.8" fill="none" stroke="#111" stroke-width="2.4"/><path d="M733.9,866.8 C741.5,870.2 764.8,881.3 779.8,886.8 C794.9,892.3 816.6,897.7 824.0,899.8" fill="none" stroke="#111" stroke-width="2.4"/><path d="M779.8,885.8 C780.5,881.8 780.8,870.8 783.8,861.8 C786.8,852.9 791.1,840.9 797.8,831.9 C804.5,822.9 819.6,811.9 824.0,807.9" fill="none" stroke="#111" stroke-width="2.4"/><path d="M647.9,847.9 L672.9,843.9" fill="none" stroke="#111" stroke-width="2.0"/><path d="M745.9,828.9 C750.2,829.4 763.5,831.4 771.8,831.9 C780.2,832.4 791.8,831.9 795.8,831.9" fill="none" stroke="#111" stroke-width="2.2"/><path d="M889.9,704.0 L903.9,773.9 L903.9,819.9 L913.9,821.9" fill="none" stroke="#e3922e" stroke-width="1.1"/><path d="M917.9,684.0 C918.6,695.6 922.6,731.0 921.9,753.9 C921.3,776.9 915.3,810.6 913.9,821.9" fill="none" stroke="#e3922e" stroke-width="1.1"/><path d="M971.9,674.0 C973.5,687.3 978.5,720.3 981.9,753.9 C985.2,787.6 990.2,855.5 991.9,875.8" fill="none" stroke="#e3922e" stroke-width="1.1"/><path d="M985.9,674.0 C988.2,680.7 996.5,697.3 999.9,714.0 C1003.2,730.6 1005.2,747.3 1005.9,773.9 C1006.5,800.6 1004.2,857.2 1003.9,873.8" fill="none" stroke="#e3922e" stroke-width="1.1"/><path d="M971.9,674.0 C980.5,684.7 1006.5,712.0 1023.8,737.9 C1041.2,763.9 1067.3,814.6 1076.0,829.9" fill="none" stroke="#e3922e" stroke-width="1.1"/><path d="M987.9,698.0 C997.2,712.3 1029.1,764.6 1043.8,783.9 C1058.5,803.2 1070.6,808.9 1076.0,813.9" fill="none" stroke="#e3922e" stroke-width="1.1"/><path d="M1009.9,674.0 C1010.2,687.3 1009.5,724.0 1011.8,753.9 C1014.2,783.9 1018.5,827.2 1023.8,853.9 C1029.2,880.5 1040.5,903.8 1043.8,913.8" fill="none" stroke="#e3922e" stroke-width="1.1"/><path d="M824.0,849.9 L853.0,866.8 L1071.8,924.8" fill="none" stroke="#e3922e" stroke-width="1.1"/><path d="M824.0,781.9 C830.7,793.9 853.3,830.0 864.0,853.9 C874.6,877.7 884.0,913.0 887.9,924.8" fill="none" stroke="#e3922e" stroke-width="1.1"/><path d="M834.0,861.8 C837.3,863.8 850.3,863.3 854.0,873.8 C857.6,884.3 855.6,916.3 856.0,924.8" fill="none" stroke="#e3922e" stroke-width="1.1"/><path d="M1023.8,674.0 C1023.5,697.3 1021.5,772.1 1021.8,813.9 C1022.2,855.7 1025.2,906.3 1025.8,924.8" fill="none" stroke="#e3922e" stroke-width="1.1"/><path d="M824.0,924.8 L1076.0,924.8" fill="none" stroke="#f0a060" stroke-width="1.2"/><path d="M824.0,785.9 C827.3,792.6 838.0,812.1 844.0,825.9 C850.0,839.7 857.3,861.7 860.0,868.8" fill="none" stroke="#e3922e" stroke-width="1.1"/><path d="M856.0,674.0 C853.3,684.0 844.3,714.0 840.0,734.0 C835.7,753.9 832.0,772.6 830.0,793.9 C828.0,815.2 828.3,850.5 828.0,861.8" fill="none" stroke="#e3922e" stroke-width="1.1"/><path d="M824.0,859.9 C830.0,858.9 818.0,855.2 860.0,853.9 C902.0,852.5 1040.0,852.2 1076.0,851.9" fill="none" stroke="#e3922e" stroke-width="1.1"/><path d="M915.9,821.9 C923.9,826.5 951.2,841.2 963.9,849.9 C976.5,858.5 987.2,869.8 991.9,873.8" fill="none" stroke="#e3922e" stroke-width="1.1"/><path d="M860.0,674.0 C857.6,680.7 850.5,699.0 846.0,714.0 C841.5,729.0 835.3,739.9 833.0,763.9 C830.7,787.9 832.2,842.2 832.0,857.9" fill="none" stroke="#e8841c" stroke-width="2.4"/><path d="M860.0,674.0 C857.6,680.7 850.5,699.0 846.0,714.0 C841.5,729.0 835.3,739.9 833.0,763.9 C830.7,787.9 832.2,842.2 832.0,857.9" fill="none" stroke="#2a1206" stroke-width="1.2"/><path d="M886.0,674.0 C883.0,681.3 873.3,703.3 868.0,718.0 C862.6,732.6 857.0,751.3 854.0,761.9 C851.0,772.6 852.5,771.9 850.0,781.9 C847.5,791.9 840.8,815.2 839.0,821.9" fill="none" stroke="#e8841c" stroke-width="2.4"/><path d="M886.0,674.0 C883.0,681.3 873.3,703.3 868.0,718.0 C862.6,732.6 857.0,751.3 854.0,761.9 C851.0,772.6 852.5,771.9 850.0,781.9 C847.5,791.9 840.8,815.2 839.0,821.9" fill="none" stroke="#2a1206" stroke-width="1.2"/><path d="M839.0,821.9 L860.0,849.9 L1076.0,849.9" fill="none" stroke="#e8841c" stroke-width="2.4"/><path d="M839.0,821.9 L860.0,849.9 L1076.0,849.9" fill="none" stroke="#2a1206" stroke-width="1.2"/><path d="M850.0,781.9 C854.0,789.2 867.0,812.2 874.0,825.9 C881.0,839.5 888.9,857.5 891.9,863.8" fill="none" stroke="#e8841c" stroke-width="2.4"/><path d="M850.0,781.9 C854.0,789.2 867.0,812.2 874.0,825.9 C881.0,839.5 888.9,857.5 891.9,863.8" fill="none" stroke="#2a1206" stroke-width="1.2"/><path d="M942.9,674.0 C942.1,684.0 940.4,715.3 937.9,734.0 C935.4,752.6 931.6,771.6 927.9,785.9 C924.3,800.2 917.9,814.2 915.9,819.9" fill="none" stroke="#e8841c" stroke-width="2.4"/><path d="M942.9,674.0 C942.1,684.0 940.4,715.3 937.9,734.0 C935.4,752.6 931.6,771.6 927.9,785.9 C924.3,800.2 917.9,814.2 915.9,819.9" fill="none" stroke="#2a1206" stroke-width="1.2"/><path d="M915.9,819.9 C920.6,823.5 929.6,834.2 943.9,841.9 C958.2,849.5 992.2,861.8 1001.9,865.8" fill="none" stroke="#e8841c" stroke-width="2.4"/><path d="M915.9,819.9 C920.6,823.5 929.6,834.2 943.9,841.9 C958.2,849.5 992.2,861.8 1001.9,865.8" fill="none" stroke="#2a1206" stroke-width="1.2"/><path d="M1021.8,674.0 C1020.8,685.0 1018.8,708.0 1015.8,739.9 C1012.8,771.9 1005.9,844.9 1003.9,865.8" fill="none" stroke="#e8841c" stroke-width="2.4"/><path d="M1021.8,674.0 C1020.8,685.0 1018.8,708.0 1015.8,739.9 C1012.8,771.9 1005.9,844.9 1003.9,865.8" fill="none" stroke="#2a1206" stroke-width="1.2"/><path d="M1029.8,674.0 C1030.5,684.0 1032.2,710.6 1033.8,734.0 C1035.5,757.3 1038.0,792.9 1039.8,813.9 C1041.7,834.9 1044.0,852.2 1044.8,859.9" fill="none" stroke="#e8841c" stroke-width="2.4"/><path d="M1029.8,674.0 C1030.5,684.0 1032.2,710.6 1033.8,734.0 C1035.5,757.3 1038.0,792.9 1039.8,813.9 C1041.7,834.9 1044.0,852.2 1044.8,859.9" fill="none" stroke="#2a1206" stroke-width="1.2"/><path d="M1031.8,674.0 C1033.8,682.3 1039.2,707.3 1043.8,724.0 C1048.5,740.6 1054.4,759.6 1059.8,773.9 C1065.2,788.2 1073.3,803.9 1076.0,809.9" fill="none" stroke="#e8841c" stroke-width="2.4"/><path d="M1031.8,674.0 C1033.8,682.3 1039.2,707.3 1043.8,724.0 C1048.5,740.6 1054.4,759.6 1059.8,773.9 C1065.2,788.2 1073.3,803.9 1076.0,809.9" fill="none" stroke="#2a1206" stroke-width="1.2"/><path d="M824.0,716.0 L832.0,753.9" fill="none" stroke="#e8841c" stroke-width="2.0"/><path d="M824.0,716.0 L832.0,753.9" fill="none" stroke="#2a1206" stroke-width="1.0"/><path d="M824.0,855.9 L848.0,856.9" fill="none" stroke="#e8841c" stroke-width="2.0"/><path d="M824.0,855.9 L848.0,856.9" fill="none" stroke="#2a1206" stroke-width="1.0"/><path d="M824.0,805.9 C828.5,804.1 841.0,794.6 851.0,794.9 C861.0,795.2 870.6,804.1 884.0,807.9 C897.3,811.7 923.1,816.2 930.9,817.9" fill="none" stroke="#111" stroke-width="2.4"/><path d="M824.0,898.8 C829.0,899.7 843.0,902.5 854.0,903.8 C865.0,905.1 875.0,906.6 889.9,906.8 C904.9,907.0 926.3,905.6 943.9,904.8 C961.6,904.0 987.2,902.3 995.9,901.8" fill="none" stroke="#111" stroke-width="2.4"/><path d="M995.9,901.8 L1002.9,868.8" fill="none" stroke="#111" stroke-width="2.4"/><path d="M913.9,819.9 C911.6,823.9 903.6,834.9 899.9,843.9 C896.3,852.9 893.6,863.5 891.9,873.8 C890.3,884.2 890.3,900.5 889.9,905.8" fill="none" stroke="#b0a828" stroke-width="2.0"/><rect x="333.5" y="171.5" width="789" height="767" fill="none" stroke="#ffa888" stroke-width="1"/><rect x="329.0" y="167.0" width="9" height="9" fill="#fff" stroke="#ffa888" stroke-width="1"/><rect x="329.0" y="550.5" width="9" height="9" fill="#fff" stroke="#ffa888" stroke-width="1"/><rect x="329.0" y="934.0" width="9" height="9" fill="#fff" stroke="#ffa888" stroke-width="1"/><rect x="723.5" y="167.0" width="9" height="9" fill="#fff" stroke="#ffa888" stroke-width="1"/><rect x="723.5" y="934.0" width="9" height="9" fill="#fff" stroke="#ffa888" stroke-width="1"/><rect x="1118.0" y="167.0" width="9" height="9" fill="#fff" stroke="#ffa888" stroke-width="1"/><rect x="1118.0" y="550.5" width="9" height="9" fill="#fff" stroke="#ffa888" stroke-width="1"/><rect x="1118.0" y="934.0" width="9" height="9" fill="#fff" stroke="#ffa888" stroke-width="1"/></svg>
<div class="a" style="left:1537px;top:0px;width:63px;height:1060px;background:#444;"></div>
<div class="a" style="left:1537px;top:0px;width:1px;height:1016px;background:#111;"></div>
<div class="a" style="left:1538px;top:0px;width:57px;height:13px;background:linear-gradient(#5a5a5a,#3e3e3e);border-bottom:1px solid #0a0a0a;border-right:1px solid #050505;box-sizing:border-box"></div>
<div class="a" style="left:1538px;top:72px;width:57px;height:2px;background:#525252;"></div>
<div class="a" style="left:1538px;top:132px;width:57px;height:58px;background:#161616;"></div>
<div class="a" style="left:1597px;top:0px;width:1px;height:1062px;background:#808080;"></div>
<div class="a" style="left:1598px;top:0px;width:1px;height:1062px;background:#5e5e5e;"></div>
<div class="a" style="left:1599px;top:0px;width:1px;height:1062px;background:#3c3c3c;"></div>
<svg class="a" style="left:1537px;top:0" width="63" height="300" viewBox="0 0 63 300">
<defs><radialGradient id="eyeg" cx="0.4" cy="0.35" r="0.7"><stop offset="0" stop-color="#ffffff"/><stop offset="0.6" stop-color="#d8f4f8"/><stop offset="1" stop-color="#8fe0ee"/></radialGradient></defs>
<circle cx="28.2" cy="41.9" r="15.6" fill="url(#eyeg)" stroke="#1ebfe0" stroke-width="1.8"/>
<path d="M14.5,41.2 Q27,27.5 40,41.5 Q27,55 14.5,41.2 Z" fill="#fff" stroke="#111" stroke-width="1.3"/>
<circle cx="26.3" cy="41" r="5.6" fill="#555"/>
<path d="M32.5,34.5 L35,31 M35.5,36 L38,33 M37.5,39 L40.5,35.5" stroke="#111" stroke-width="1.2"/>
<g transform="translate(10.5,92)"><path d="M13.5,14.8 L26.5,20.4 L13.5,26.0 L0.5,20.4 Z" fill="#444" stroke="#8a8a8a" stroke-width="2" stroke-linejoin="round"/><path d="M13.5,10.2 L26.5,15.8 L13.5,21.4 L0.5,15.8 Z" fill="#444" stroke="#8a8a8a" stroke-width="2" stroke-linejoin="round"/><path d="M13.5,5.6 L26.5,11.2 L13.5,16.8 L0.5,11.2 Z" fill="#444" stroke="#8a8a8a" stroke-width="2" stroke-linejoin="round"/><path d="M13.5,1.0 L26.5,6.6 L13.5,12.2 L0.5,6.6 Z" fill="#262626" stroke="#262626" stroke-width="1.6" stroke-linejoin="round"/></g>
<g transform="translate(10.5,151)"><path d="M13.5,14.8 L26.5,20.4 L13.5,26.0 L0.5,20.4 Z" fill="#161616" stroke="#c4c4c4" stroke-width="2" stroke-linejoin="round"/><path d="M13.5,10.2 L26.5,15.8 L13.5,21.4 L0.5,15.8 Z" fill="#161616" stroke="#c4c4c4" stroke-width="2" stroke-linejoin="round"/><path d="M13.5,5.6 L26.5,11.2 L13.5,16.8 L0.5,11.2 Z" fill="#1ec8e6" stroke="#1ec8e6" stroke-width="1.6" stroke-linejoin="round"/><path d="M13.5,1.0 L26.5,6.6 L13.5,12.2 L0.5,6.6 Z" fill="#161616" stroke="#c4c4c4" stroke-width="2" stroke-linejoin="round"/></g>
<g transform="translate(10.5,210)"><path d="M13.5,14.8 L26.5,20.4 L13.5,26.0 L0.5,20.4 Z" fill="#444" stroke="#8a8a8a" stroke-width="2" stroke-linejoin="round"/><path d="M13.5,10.2 L26.5,15.8 L13.5,21.4 L0.5,15.8 Z" fill="#262626" stroke="#262626" stroke-width="1.6" stroke-linejoin="round"/><path d="M13.5,5.6 L26.5,11.2 L13.5,16.8 L0.5,11.2 Z" fill="#444" stroke="#8a8a8a" stroke-width="2" stroke-linejoin="round"/><path d="M13.5,1.0 L26.5,6.6 L13.5,12.2 L0.5,6.6 Z" fill="#444" stroke="#8a8a8a" stroke-width="2" stroke-linejoin="round"/></g>
<g transform="translate(10.5,268)"><path d="M13.5,14.8 L26.5,20.4 L13.5,26.0 L0.5,20.4 Z" fill="#262626" stroke="#262626" stroke-width="1.6" stroke-linejoin="round"/><path d="M13.5,10.2 L26.5,15.8 L13.5,21.4 L0.5,15.8 Z" fill="#444" stroke="#8a8a8a" stroke-width="2" stroke-linejoin="round"/><path d="M13.5,5.6 L26.5,11.2 L13.5,16.8 L0.5,11.2 Z" fill="#444" stroke="#8a8a8a" stroke-width="2" stroke-linejoin="round"/><path d="M13.5,1.0 L26.5,6.6 L13.5,12.2 L0.5,6.6 Z" fill="#444" stroke="#8a8a8a" stroke-width="2" stroke-linejoin="round"/></g>
<ellipse cx="40.6" cy="89.8" rx="3.6" ry="4.3" fill="none" stroke="#262626" stroke-width="1.5"/>
<path d="M38.5,143.5 V151.8 H46" fill="none" stroke="#1ec8e6" stroke-width="2"/>
<path d="M45.2,203.8 Q43.5,201.8 41.3,202 Q37.8,202.5 37.8,207 Q37.8,211.5 41.3,212 Q43.5,212.2 45.2,210.2" fill="none" stroke="#262626" stroke-width="1.5"/>
<path d="M38.3,260.5 V266.5 Q38.3,270 41.8,270 Q45.3,270 45.3,266.5 V260.5" fill="none" stroke="#262626" stroke-width="1.5"/>
</svg>
<div class="a" style="left:0px;top:1016px;width:1597px;height:2px;background:#6a6a6a;"></div>
<div class="a" style="left:0px;top:1018px;width:1597px;height:42px;background:#434343;"></div>
<svg class="a" style="left:0px;top:1018px" width="140.00" height="40.00" viewBox="0 0 140 40">
<rect x="5.5" y="11.5" width="24" height="17" fill="none" stroke="#c2c2c2" stroke-width="1.6"/>
<rect x="9" y="14.5" width="17" height="11" fill="none" stroke="#b8b8b8" stroke-width="1.1"/>
<rect x="10.5" y="16" width="14" height="8" fill="none" stroke="#2a2a2a" stroke-width="1"/>
<rect x="16.2" y="18.8" width="2.6" height="2.6" fill="#bdbdbd"/>
<path d="M44.3,8 V31 M40,12.3 H64" stroke="#2ec4e0" stroke-width="1.5"/>
<path d="M51,25.5 Q57.5,18.5 64,25.5 Q57.5,31.5 51,25.5 Z" fill="#e8e8e8"/>
<circle cx="57" cy="25.3" r="2.4" fill="#5a5a5a"/>
<path d="M60,21 L61.5,18.5 M62,22 L64,20 M63,24 L65.5,23" stroke="#ddd" stroke-width="1"/>
<rect x="75" y="10" width="24.5" height="20.5" fill="none" stroke="#9a2fa4" stroke-width="1.6"/>
<ellipse cx="88.5" cy="19" rx="7.8" ry="5.8" transform="rotate(15 88.5 19)" fill="none" stroke="#e8902a" stroke-width="1.6"/>
<path d="M81.5,21.5 Q78.5,20.5 79,23 Q80,25 82,23.5 Q80.5,26 79.5,27" fill="none" stroke="#e8902a" stroke-width="1.5"/>
<path d="M117,19 V14.5 Q117,10.8 121.7,10.8 Q126.3,10.8 126.3,14.5 V19" fill="none" stroke="#c8c8c8" stroke-width="1.6"/>
<rect x="115" y="19" width="13.5" height="9" fill="none" stroke="#f0a818" stroke-width="1.7"/>
</svg>
<div class="a" style="left:139px;top:1021px;width:35px;height:34px;background:#161616;"></div>
<svg class="a" style="left:139px;top:1021px" width="35.00" height="34.00" viewBox="0 0 35 34">
<path d="M17,5.5 L25.5,5.5 L20.5,13 L26,13 L11,29 L15.5,17 L9.5,17 Z" fill="#f0d050" stroke="#111" stroke-width="0.6"/>
<path d="M34,25 L34,34 L25,34 Z" fill="#c8c8c8"/>
</svg>
<svg class="a" style="left:176px;top:1021px" width="30.00" height="34.00" viewBox="0 0 30 34">
<path d="M7.5,11.5 A11,11 0 1 1 15,28.5" fill="none" stroke="#bdbdbd" stroke-width="1.8"/>
<path d="M3.5,14.5 L5,7.5 L12,10.5 Z" fill="#bdbdbd"/>
<circle cx="14.3" cy="17.4" r="5.6" fill="none" stroke="#bdbdbd" stroke-width="1.7"/>
<path d="M14.3,8.8 V12.5 M14.3,22.3 V26 M5.7,17.4 H9.4 M19.2,17.4 H22.9" stroke="#bdbdbd" stroke-width="1.7"/>
</svg>
<div class="a" style="left:209px;top:1021px;width:34px;height:34px;background:#484848;border-right:1px solid #151515;border-bottom:1px solid #151515"></div>
<svg class="a" style="left:209px;top:1021px" width="34.00" height="34.00" viewBox="0 0 34 34">
<path d="M6,15 Q6,13 8,13 H9.5 L11,10.5 H18 L19.5,13 H23 Q25,13 25,15 V27.5 H6 Z" fill="#c4c4c4"/>
<circle cx="15" cy="20.5" r="4.6" fill="none" stroke="#8a8a8a" stroke-width="1"/>
<circle cx="15" cy="20.5" r="2.8" fill="#7a7a7a"/>
<path d="M20,9 L25.5,6 V24" fill="none" stroke="#1a1a1a" stroke-width="5" stroke-linecap="round" stroke-linejoin="round" opacity="0.35"/>
<path d="M20,9 L25.5,6 V24" fill="none" stroke="#f2cc20" stroke-width="3.4" stroke-linecap="round" stroke-linejoin="round"/>
<path d="M33,25 L33,33 L25,33 Z" fill="#c8c8c8"/>
</svg>
<svg class="a" style="left:247px;top:1021px" width="30.00" height="34.00" viewBox="0 0 30 34">
<path d="M4,14 V30 H25 V14 Z" fill="#3b3b3b"/>
<path d="M4,14 Q14.5,2 25,14 Q14.5,23 4,14 Z" fill="#3b3b3b" stroke="#333" stroke-width="1.6"/>
<circle cx="14.5" cy="13" r="4" fill="#333"/>
<path d="M20,6 L21.5,3 M22.5,8 L25,5 M24,11 L27,9" stroke="#333" stroke-width="1.5"/>
<circle cx="14.5" cy="21" r="3.5" fill="#363636"/>
</svg>
<div class="t" style="left:307px;top:1031.20px;font-size:15px;color:#c4c4c4;font-weight:400;">125%</div>
<svg class="a" style="left:364px;top:1046px" width="8" height="8"><path d="M8,0 L8,8 L0,8 Z" fill="#c8c8c8"/></svg>
<div class="a" style="left:382px;top:1021px;width:35px;height:34px;background:#161616;"></div>
<svg class="a" style="left:382px;top:1021px" width="35.00" height="34.00" viewBox="0 0 35 34"><circle cx="26.00" cy="17.00" r="4.6" fill="#9a9a9a"/><circle cx="24.01" cy="22.46" r="4.6" fill="#9a9a9a"/><circle cx="18.98" cy="25.37" r="4.6" fill="#9a9a9a"/><circle cx="13.25" cy="24.36" r="4.6" fill="#9a9a9a"/><circle cx="9.51" cy="19.91" r="4.6" fill="#9a9a9a"/><circle cx="9.51" cy="14.09" r="4.6" fill="#9a9a9a"/><circle cx="13.25" cy="9.64" r="4.6" fill="#9a9a9a"/><circle cx="18.98" cy="8.63" r="4.6" fill="#9a9a9a"/><circle cx="24.01" cy="11.54" r="4.6" fill="#9a9a9a"/><circle cx="17.5" cy="17" r="9.5" fill="#9a9a9a"/><circle cx="17.5" cy="17" r="8.3" fill="#d8d8d8"/><line x1="20.32" y1="18.03" x2="25.01" y2="19.74" stroke="#9a9a9a" stroke-width="1.2"/><line x1="19.00" y1="19.60" x2="21.49" y2="23.93" stroke="#9a9a9a" stroke-width="1.2"/><line x1="16.98" y1="19.95" x2="16.10" y2="24.88" stroke="#9a9a9a" stroke-width="1.2"/><line x1="15.20" y1="18.93" x2="11.37" y2="22.14" stroke="#9a9a9a" stroke-width="1.2"/><line x1="14.50" y1="17.00" x2="9.50" y2="16.99" stroke="#9a9a9a" stroke-width="1.2"/><line x1="15.20" y1="15.07" x2="11.38" y2="11.85" stroke="#9a9a9a" stroke-width="1.2"/><line x1="16.98" y1="14.05" x2="16.12" y2="9.12" stroke="#9a9a9a" stroke-width="1.2"/><line x1="19.00" y1="14.40" x2="21.51" y2="10.08" stroke="#9a9a9a" stroke-width="1.2"/><line x1="20.32" y1="15.98" x2="25.02" y2="14.27" stroke="#9a9a9a" stroke-width="1.2"/><circle cx="17.5" cy="17" r="2.2" fill="#999"/></svg>
<svg class="a" style="left:421px;top:1021px" width="30.00" height="34.00" viewBox="0 0 30 34"><ellipse cx="13.00" cy="9.50" rx="4.6" ry="3.4" transform="rotate(-90.0 13.00 9.50)" fill="#1ec8e6"/><ellipse cx="17.82" cy="11.25" rx="4.6" ry="3.4" transform="rotate(-50.0 17.82 11.25)" fill="#1ec8e6"/><ellipse cx="20.39" cy="15.70" rx="4.6" ry="3.4" transform="rotate(-10.0 20.39 15.70)" fill="#1ec8e6"/><ellipse cx="19.50" cy="20.75" rx="4.6" ry="3.4" transform="rotate(30.0 19.50 20.75)" fill="#1ec8e6"/><ellipse cx="15.57" cy="24.05" rx="4.6" ry="3.4" transform="rotate(70.0 15.57 24.05)" fill="#1ec8e6"/><ellipse cx="10.43" cy="24.05" rx="4.6" ry="3.4" transform="rotate(110.0 10.43 24.05)" fill="#1ec8e6"/><ellipse cx="6.50" cy="20.75" rx="4.6" ry="3.4" transform="rotate(150.0 6.50 20.75)" fill="#1ec8e6"/><ellipse cx="5.61" cy="15.70" rx="4.6" ry="3.4" transform="rotate(190.0 5.61 15.70)" fill="#1ec8e6"/><ellipse cx="8.18" cy="11.25" rx="4.6" ry="3.4" transform="rotate(230.0 8.18 11.25)" fill="#1ec8e6"/><circle cx="13" cy="17" r="6" fill="#1ec8e6"/><circle cx="13" cy="17.3" r="3.6" fill="#f2d040"/></svg>
<svg class="a" style="left:443px;top:1046px" width="8" height="8"><path d="M8,0 L8,8 L0,8 Z" fill="#c8c8c8"/></svg>
<div class="t" style="left:457.5px;top:1031.20px;font-size:15px;color:#c4c4c4;font-weight:400;">1:1</div>
<svg class="a" style="left:474px;top:1044.5px" width="8" height="8"><path d="M8,0 L8,8 L0,8 Z" fill="#c8c8c8"/></svg>
<div class="t" style="left:503.5px;top:1031.20px;font-size:15px;color:#c4c4c4;font-weight:400;transform:scaleX(0.8625);transform-origin:0 0;">sRGB</div>
<svg class="a" style="left:539px;top:1044.5px" width="8" height="8"><path d="M8,0 L8,8 L0,8 Z" fill="#c8c8c8"/></svg>
<div class="t" style="left:557.5px;top:1031.20px;font-size:15px;color:#c4c4c4;font-weight:400;transform:scaleX(1.0098);transform-origin:0 0;">Wizard_Clean_V01-4</div>
<div class="t" style="left:795px;top:1031.20px;font-size:15px;color:#c4c4c4;font-weight:400;transform:scaleX(0.9592);transform-origin:0 0;">Select</div>
<div class="a" style="left:979px;top:1024px;width:215px;height:28px;background:#be0000;"></div>
<div class="t" style="left:988px;top:1031.20px;font-size:15px;color:#ffffff;font-weight:700;transform:scaleX(1.0140);transform-origin:0 0;">Apply to Onion Skin Range</div>
<div class="t" style="left:1209px;top:1031.20px;font-size:15px;color:#b4b4b4;font-weight:400;transform:scaleX(0.9738);transform-origin:0 0;">Fr 1</div>
<div class="t" style="left:1290px;top:1031.20px;font-size:15px;color:#c4c4c4;font-weight:400;transform:scaleX(1.0502);transform-origin:0 0;">–9.57:–10.58</div>
<div class="t" style="left:1458px;top:1031.20px;font-size:15px;color:#c4c4c4;font-weight:400;">Black</div>
<div class="a" style="left:1503px;top:1026px;width:24px;height:24px;background:#000;border:1.5px solid #5a5a5a"></div>
<div class="a" style="left:0px;top:1060px;width:1597px;height:2px;background:#858585;"></div>
<div class="a" style="left:0px;top:1062px;width:1597px;height:17px;background:#575757;"></div>
<div class="a" style="left:1597px;top:1060px;width:3px;height:22px;background:#4a4a4a;"></div>
<div class="a" style="left:0px;top:1079px;width:1600px;height:1px;background:#383c3c;"></div>
<div class="a" style="left:0px;top:1080px;width:1600px;height:3px;background:#e41212;"></div>
<div class="a" style="left:0px;top:1083px;width:1600px;height:1px;background:#353a3a;"></div>
<div class="a" style="left:0px;top:1084px;width:1600px;height:98px;background:#474747;"></div>
<div class="a" style="left:1216.5px;top:1062px;width:23px;height:17px;background:#454545;"></div>
<div class="a" style="left:1241px;top:1062px;width:25px;height:17px;background:#454545;"></div>
<svg class="a" style="left:1210px;top:1062px" width="60.00" height="18.00" viewBox="0 0 60 18">
<path d="M5.5,1 V17 M30.5,1 V17 M57,1 V17" stroke="#d0d0d0" stroke-width="2.4"/>
<path d="M12,13.5 L18.5,7 L25,13.5" fill="none" stroke="#c8c8c8" stroke-width="3.2"/>
<path d="M37.5,7.5 L44,14 L50.5,7.5" fill="none" stroke="#c8c8c8" stroke-width="3.2"/>
</svg>
<svg class="a" style="left:0px;top:1122px" width="52.00" height="58.00" viewBox="0 0 52 58">
<path d="M13.5,21.5 A12.2,12.2 0 1 1 16,38" fill="none" stroke="#1a90e0" stroke-width="2.2"/>
<circle cx="13" cy="22" r="2.7" fill="#1a90e0"/>
<path d="M10.5,29.5 L21.5,36.5 L14.5,37.5 L15,42.5 Z" fill="#1a90e0"/>
<path d="M11,30.5 L15.5,41.5" stroke="#1a90e0" stroke-width="1.6"/>
</svg>
<div class="a" style="left:52px;top:1122px;width:58px;height:58px;background:#161616;"></div>
<svg class="a" style="left:52px;top:1122px" width="58.00" height="58.00" viewBox="0 0 58 58">
<defs><linearGradient id="spk" x1="0" x2="1"><stop offset="0" stop-color="#1a9ae8"/><stop offset="1" stop-color="#1180d8"/></linearGradient></defs>
<path d="M14,25 H21 L31.5,17.5 V40 L21,33 H14 Z" fill="url(#spk)"/>
<path d="M34.5,24.5 Q37.5,29 34.5,33.5" fill="none" stroke="#1a90e0" stroke-width="2"/>
<path d="M38.5,20.5 Q44,29 38.5,37.5" fill="none" stroke="#1a90e0" stroke-width="2"/>
</svg>
<svg class="a" style="left:110px;top:1122px" width="60.00" height="58.00" viewBox="0 0 60 58">
<path d="M15,25 H22 L32,17.5 V40 L22,33 H15 Z" fill="url(#spk)"/>
<path d="M43.5,24 Q42,21.5 39.5,22 Q36,22.8 36.8,26.5 Q37.5,29 40.5,30.5 Q44,32.5 43.5,35.5 Q42.5,38 39.5,37.8 Q37,37.5 36,35" fill="none" stroke="#d0d0d0" stroke-width="1.5"/>
</svg>
<div class="a" style="left:179px;top:1130px;width:129px;height:12px;background:#111;"></div>
<div class="a" style="left:230px;top:1129px;width:27px;height:14px;background:#474747;"></div>
<div class="a" style="left:231px;top:1129.5px;width:25px;height:13px;background:linear-gradient(#b0b0b0,#8a8a8a);"></div>
<svg class="a" style="left:177px;top:1150px" width="133.00" height="20.00" viewBox="0 0 133 20">
<defs><linearGradient id="strp" x1="0" x2="1"><stop offset="0" stop-color="#777"/><stop offset="0.5" stop-color="#aaa"/><stop offset="1" stop-color="#666"/></linearGradient></defs>
<rect x="0.5" y="0.5" width="131" height="18" fill="#151515" stroke="#7a7a7a" stroke-width="1"/>
<rect x="3.00" y="3" width="3.4" height="13" fill="url(#strp)"/><rect x="10.95" y="3" width="3.4" height="13" fill="url(#strp)"/><rect x="18.90" y="3" width="3.4" height="13" fill="url(#strp)"/><rect x="26.85" y="3" width="3.4" height="13" fill="url(#strp)"/><rect x="34.80" y="3" width="3.4" height="13" fill="url(#strp)"/><rect x="42.75" y="3" width="3.4" height="13" fill="url(#strp)"/><rect x="50.70" y="3" width="3.4" height="13" fill="url(#strp)"/><rect x="58.65" y="3" width="3.4" height="13" fill="url(#strp)"/><rect x="66.60" y="3" width="3.4" height="13" fill="url(#strp)"/><rect x="74.55" y="3" width="3.4" height="13" fill="url(#strp)"/><rect x="82.50" y="3" width="3.4" height="13" fill="url(#strp)"/><rect x="90.45" y="3" width="3.4" height="13" fill="url(#strp)"/><rect x="98.40" y="3" width="3.4" height="13" fill="url(#strp)"/><rect x="106.35" y="3" width="3.4" height="13" fill="url(#strp)"/><rect x="114.30" y="3" width="3.4" height="13" fill="url(#strp)"/><rect x="122.25" y="3" width="3.4" height="13" fill="url(#strp)"/><rect x="130.20" y="3" width="3.4" height="13" fill="url(#strp)"/>
</svg>
<div class="t" style="left:320px;top:1142.36px;font-size:18px;color:#c8c8c8;font-weight:400;transform:scaleX(0.9615);transform-origin:0 0;">Frame</div>
<div class="a" style="left:381px;top:1132px;width:103px;height:38px;background:#3c3c3c;"></div>
<div class="a" style="left:382px;top:1133px;width:75px;height:36px;background:#191919;"></div>
<div class="a" style="left:457px;top:1133px;width:1px;height:36px;background:#555;"></div>
<div class="a" style="left:458px;top:1133px;width:25px;height:17px;background:#1c1c1c;border:1px solid #5a5a5a"></div>
<div class="a" style="left:458px;top:1151px;width:25px;height:18px;background:#1c1c1c;border:1px solid #5a5a5a"></div>
<svg class="a" style="left:458px;top:1133px" width="25.00" height="36.00" viewBox="0 0 25 36"><path d="M6,12 L12.5,6 L19,12 Z" fill="#a8a8a8"/><path d="M6,24 L12.5,30 L19,24 Z" fill="#a8a8a8"/></svg>
<div class="t" style="left:392px;top:1142.96px;font-size:18px;color:#d8d8d8;font-weight:400;">1</div>
<div class="t" style="left:496px;top:1142.36px;font-size:18px;color:#c8c8c8;font-weight:400;transform:scaleX(1.0263);transform-origin:0 0;">Start</div>
<div class="a" style="left:549px;top:1132px;width:103px;height:38px;background:#3c3c3c;"></div>
<div class="a" style="left:550px;top:1133px;width:75px;height:36px;background:#191919;"></div>
<div class="a" style="left:625px;top:1133px;width:1px;height:36px;background:#555;"></div>
<div class="a" style="left:626px;top:1133px;width:25px;height:17px;background:#1c1c1c;border:1px solid #5a5a5a"></div>
<div class="a" style="left:626px;top:1151px;width:25px;height:18px;background:#1c1c1c;border:1px solid #5a5a5a"></div>
<svg class="a" style="left:626px;top:1133px" width="25.00" height="36.00" viewBox="0 0 25 36"><path d="M6,12 L12.5,6 L19,12 Z" fill="#a8a8a8"/><path d="M6,24 L12.5,30 L19,24 Z" fill="#a8a8a8"/></svg>
<div class="t" style="left:560px;top:1142.96px;font-size:18px;color:#d8d8d8;font-weight:400;">1</div>
<div class="t" style="left:664px;top:1142.36px;font-size:18px;color:#c8c8c8;font-weight:400;transform:scaleX(1.0000);transform-origin:0 0;">Stop</div>
<div class="a" style="left:715px;top:1132px;width:103px;height:38px;background:#3c3c3c;"></div>
<div class="a" style="left:716px;top:1133px;width:75px;height:36px;background:#191919;"></div>
<div class="a" style="left:791px;top:1133px;width:1px;height:36px;background:#555;"></div>
<div class="a" style="left:792px;top:1133px;width:25px;height:17px;background:#1c1c1c;border:1px solid #5a5a5a"></div>
<div class="a" style="left:792px;top:1151px;width:25px;height:18px;background:#1c1c1c;border:1px solid #5a5a5a"></div>
<svg class="a" style="left:792px;top:1133px" width="25.00" height="36.00" viewBox="0 0 25 36"><path d="M6,12 L12.5,6 L19,12 Z" fill="#a8a8a8"/><path d="M6,24 L12.5,30 L19,24 Z" fill="#a8a8a8"/></svg>
<div class="t" style="left:726px;top:1142.96px;font-size:18px;color:#d8d8d8;font-weight:400;">70</div>
<div class="t" style="left:827px;top:1142.36px;font-size:18px;color:#c8c8c8;font-weight:400;transform:scaleX(0.8000);transform-origin:0 0;">FPS</div>
<div class="a" style="left:865px;top:1132px;width:108px;height:38px;background:#3c3c3c;"></div>
<div class="a" style="left:866px;top:1133px;width:79px;height:36px;background:#191919;"></div>
<div class="a" style="left:945px;top:1133px;width:1px;height:36px;background:#555;"></div>
<div class="a" style="left:946px;top:1133px;width:26px;height:36px;background:#1c1c1c;border:1px solid #5a5a5a"></div>
<svg class="a" style="left:946px;top:1133px" width="26.00" height="36.00" viewBox="0 0 26 36"><path d="M7,15 L13,21 L19,15 Z" fill="#a8a8a8"/></svg>
<div class="t" style="left:873px;top:1141.76px;font-size:18px;color:#d8d8d8;font-weight:400;">24</div>
<div class="a" style="left:1023px;top:1122px;width:17px;height:58px;background:linear-gradient(90deg,#303030,#5a5a5a 40%,#4a4a4a 70%,#2a2a2a);border:1px solid #111"></div>
<div class="a" style="left:1041px;top:1130px;width:74px;height:40px;background:#3c3c3c;"></div>
<div class="a" style="left:1042px;top:1131px;width:43px;height:38px;background:#191919;"></div>
<svg class="a" style="left:1042px;top:1131px" width="43.00" height="38.00" viewBox="0 0 43 38"><path d="M7,28 L31,7" stroke="#c8c8c8" stroke-width="1.2"/></svg>
<div class="a" style="left:1087px;top:1132px;width:26px;height:36px;background:#1c1c1c;border:1px solid #5a5a5a"></div>
<svg class="a" style="left:1087px;top:1132px" width="26.00" height="36.00" viewBox="0 0 26 36"><path d="M7,15 L13,21 L19,15 Z" fill="#a8a8a8"/></svg>
<svg class="a" style="left:1118.6px;top:1122.3px" width="65.00" height="65.00" viewBox="0 0 50 50">
<path d="M12,30.5 Q12.5,23 20.5,22 M26,21 Q31,19 31,9" fill="none" stroke="#c8c8c8" stroke-width="1.7"/>
<path d="M10,21.5 H29" stroke="#f06020" stroke-width="1.7"/>
<circle cx="10.5" cy="21.5" r="2" fill="#f06020"/><circle cx="28.5" cy="21.5" r="2" fill="#f06020"/>
<rect x="19.5" y="18.5" width="6" height="6" fill="#fff" stroke="#222" stroke-width="0.8"/>
</svg>
<svg class="a" style="left:1177.2px;top:1122.2px" width="69.00" height="69.00" viewBox="0 0 50 50">
<path d="M9.5,30.5 Q9.5,17 23,15.5" fill="none" stroke="#c8c8c8" stroke-width="1.7"/>
<path d="M9.5,12.5 H25" stroke="#f06020" stroke-width="1.7"/>
<circle cx="10" cy="12.5" r="2.4" fill="#f06020"/>
<rect x="21.5" y="9.5" width="6" height="6" fill="#fff" stroke="#222" stroke-width="0.8"/>
</svg>
<svg class="a" style="left:1226.1px;top:1122.2px" width="69.00" height="69.00" viewBox="0 0 50 50">
<path d="M33.5,30.5 Q33.5,17 20,15.5" fill="none" stroke="#c8c8c8" stroke-width="1.7"/>
<path d="M18,12.5 H33.5" stroke="#f06020" stroke-width="1.7"/>
<circle cx="33" cy="12.5" r="2.4" fill="#f06020"/>
<rect x="15.5" y="9.5" width="6" height="6" fill="#fff" stroke="#222" stroke-width="0.8"/>
</svg>
<svg class="a" style="left:1294.1px;top:1123.2px" width="60.00" height="60.00" viewBox="0 0 50 50">
<path d="M12.5,30.5 Q12.5,23 19,22 M24,21 Q29,19 29,9" fill="none" stroke="#c8c8c8" stroke-width="1.7"/>
<path d="M10,21.5 H28" stroke="#f06020" stroke-width="1.7"/>
<circle cx="10.5" cy="21.5" r="2" fill="#f06020"/><circle cx="28" cy="21.5" r="2" fill="#f06020"/>
<rect x="18.5" y="18.5" width="6" height="6" fill="#fff" stroke="#222" stroke-width="0.8"/>
<rect x="23.5" y="23.5" width="13" height="9.5" fill="#fff" stroke="#22c0e0" stroke-width="1.6"/>
<rect x="23.5" y="23.5" width="13" height="2.5" fill="#22c0e0"/>
</svg>
<svg class="a" style="left:1351.4px;top:1124px" width="65.00" height="65.00" viewBox="0 0 50 50">
<path d="M9,21 Q15,22 17,16 Q19,10 25,11" fill="none" stroke="#c8c8c8" stroke-width="1.7"/>
<path d="M14,30 Q20,31 22,25 Q24,19 30,20" fill="none" stroke="#c8c8c8" stroke-width="1.7"/>
<path d="M17,11 H25 M8,21.5 H16 M22,20 H30 M15,30 H23" stroke="#f06020" stroke-width="1.6"/>
</svg>
<svg class="a" style="left:1415px;top:1132px" width="50.00" height="50.00" viewBox="0 0 50 50">
<defs><linearGradient id="bx" x1="0" y1="0" x2="1" y2="1"><stop offset="0" stop-color="#f4fcff"/><stop offset="1" stop-color="#9adbe8"/></linearGradient></defs>
<rect x="11.5" y="11" width="24" height="20" fill="url(#bx)" stroke="#6ab8c8" stroke-width="1"/>
<path d="M14,29 L30,15 M16,17 L31,29" stroke="#111" stroke-width="1.4"/>
<circle cx="12.5" cy="9.5" r="7" fill="#1ec0e0"/>
<path d="M12.5,5.5 V13.5 M8.5,9.5 H16.5" stroke="#111" stroke-width="1.8"/>
</svg>
<svg class="a" style="left:1470px;top:1130px" width="55.00" height="50.00" viewBox="0 0 55 50">
<rect x="18.5" y="17" width="18" height="15" fill="url(#bx)" stroke="#6ab8c8" stroke-width="1"/>
<rect x="13.5" y="12.5" width="18" height="15" fill="url(#bx)" stroke="#6ab8c8" stroke-width="1"/>
<path d="M16,22 h2 m1.5,0 h2 m1.5,0 h2 M21,28 h2 m1.5,0 h2 m1.5,0 h2" stroke="#222" stroke-width="1.6"/>
<path d="M23.5,4.5 L34.5,11.5 M29,11.5 H34.5 V7" fill="none" stroke="#c8c8c8" stroke-width="1.3"/>
<circle cx="23.5" cy="9.5" r="6.8" fill="#1ec0e0"/>
<path d="M23.5,5.5 V13.5 M19.5,9.5 H27.5" stroke="#111" stroke-width="1.8"/>
</svg>
<div class="a" style="left:1526px;top:1122px;width:58px;height:58px;background:#161616;"></div>
<svg class="a" style="left:1526px;top:1122px" width="58.00" height="58.00" viewBox="0 0 58 58">
<path d="M39,17 V38 H20" fill="none" stroke="#2c2c2c" stroke-width="2.2"/>
<rect x="36" y="14" width="6" height="7" fill="#e0242a"/>
<rect x="14" y="34" width="6" height="7" fill="#e0242a"/>
</svg>
<div class="a" style="left:0px;top:1182px;width:1600px;height:1px;background:#6a6a6a;"></div>
<div class="a" style="left:0px;top:1183px;width:1600px;height:78px;background:#464646;"></div>
<div class="a" style="left:28px;top:1183px;width:1px;height:36px;background:#333;"></div>
<div class="t" style="left:32px;top:1192.96px;font-size:18px;color:#c4c4c4;font-weight:400;">Layers</div>
<svg class="a" style="left:200px;top:1183px" width="115.00" height="36.00" viewBox="0 0 115 36">
<path d="M18,10 V26 M10,18 H26" stroke="#cdcdcd" stroke-width="3.2"/>
<path d="M31,23.5 V30 H25 Z" fill="#c8c8c8"/>
<path d="M37,17.5 H53" stroke="#cdcdcd" stroke-width="3.2"/>
<path d="M62,14 L65,10.5 L66,15 Z" fill="#d02020"/>
<circle cx="67" cy="16.5" r="2.4" fill="#f0d848"/>
<rect x="68.5" y="10.5" width="3.4" height="3.4" fill="#1a90e0"/>
<path d="M75,16 V26 M70,21 H80" stroke="#cdcdcd" stroke-width="3"/>
<path d="M93,8.5 Q89,10 88,18 Q87.5,23 89,26.5" fill="none" stroke="#f06020" stroke-width="2.2"/>
<path d="M98,9.5 Q102,9 105,10" fill="none" stroke="#f06020" stroke-width="2"/>
<circle cx="96.5" cy="12" r="3.6" fill="#fff" stroke="#888" stroke-width="1.2"/>
<path d="M102,16 V26 M97,21 H107" stroke="#cdcdcd" stroke-width="3"/>
</svg>
<div class="a" style="left:313px;top:1183px;width:1px;height:78px;background:#333;"></div>
<div class="t" style="left:323px;top:1192.96px;font-size:18px;color:#c4c4c4;font-weight:400;">Parameters</div>
<div class="a" style="left:0px;top:1219px;width:597px;height:1px;background:#151515;"></div>
<div class="a" style="left:0px;top:1220px;width:597px;height:6px;background:#4a4a4a;"></div>
<div class="a" style="left:0px;top:1226px;width:597px;height:1px;background:#222;"></div>
<div class="a" style="left:0px;top:1227px;width:597px;height:1px;background:#707070;"></div>
<div class="a" style="left:0px;top:1228px;width:597px;height:28px;background:#5a5a5a;"></div>
<div class="a" style="left:0px;top:1228px;width:31px;height:28px;background:#474747;"></div>
<div class="a" style="left:0px;top:1256px;width:597px;height:1px;background:#1e1e1e;"></div>
<div class="a" style="left:0px;top:1257px;width:597px;height:1px;background:#707070;"></div>
<div class="a" style="left:0px;top:1258px;width:597px;height:3px;background:#5a5a5a;"></div>
<div class="a" style="left:0px;top:1258px;width:31px;height:3px;background:#474747;"></div>
<div class="a" style="left:28px;top:1219px;width:1px;height:8px;background:#333;"></div>
<div class="a" style="left:313px;top:1219px;width:1px;height:42px;background:#333;"></div>
<div class="a" style="left:70px;top:1220.5px;width:16px;height:1.5px;background:#b8742a;"></div>
<div class="a" style="left:126px;top:1221px;width:11px;height:2px;background:#e8e8e8;"></div>
<div class="a" style="left:100px;top:1221px;width:1.5px;height:1.5px;background:#8a8a8a;"></div>
<div class="a" style="left:111px;top:1221px;width:1.5px;height:1.5px;background:#8a8a8a;"></div>
<div class="a" style="left:143px;top:1221px;width:1.5px;height:1.5px;background:#8a8a8a;"></div>
<div class="a" style="left:158px;top:1221px;width:1.5px;height:1.5px;background:#8a8a8a;"></div>
<div class="a" style="left:168px;top:1221px;width:1.5px;height:1.5px;background:#8a8a8a;"></div>
<svg class="a" style="left:36px;top:1226px" width="24.00" height="20.00" viewBox="0 0 24 20"><path d="M10.5,3 V16.5 H18.5 M6.5,8 H14" fill="none" stroke="#6e6e6e" stroke-width="1.2"/></svg>
<svg class="a" style="left:86px;top:1229px" width="24.00" height="25.00" viewBox="0 0 24 25">
<path d="M4,6 L7,3 H21 L21,18 L18,21 Z" fill="#c87a28"/>
<rect x="3.5" y="6" width="14.5" height="15" fill="#f4b060" stroke="#a85c18" stroke-width="1"/>
<path d="M7,13.5 H14.5 M10.75,9.5 V17.5" stroke="#111" stroke-width="1.5"/>
</svg>
<div class="t" style="left:114px;top:1235.76px;font-size:18px;color:#d8d8d8;font-weight:400;transform:scaleX(1.0215);transform-origin:0 0;">FX_Blast-G</div>
<div class="a" style="left:572px;top:1221px;width:26px;height:40px;background:#3a3a3a;"></div>
<div class="a" style="left:573px;top:1222.5px;width:24px;height:25px;background:linear-gradient(90deg,#6a6a6a,#3a3a3a);"></div>
<svg class="a" style="left:573px;top:1222px" width="24.00" height="25.00" viewBox="0 0 24 25"><path d="M7,15 L12.5,9.5 L18,15 Z" fill="#aaa"/></svg>
<div class="a" style="left:573px;top:1248px;width:23px;height:13px;background:#141414;"></div>
<div class="a" style="left:597px;top:1183px;width:2px;height:78px;background:#151515;"></div>
<div class="a" style="left:599px;top:1183px;width:16px;height:78px;background:#5a5a5a;"></div>
<div class="a" style="left:615px;top:1183px;width:1.5px;height:78px;background:#151515;"></div>
<div class="a" style="left:616.5px;top:1183px;width:983.5px;height:23px;background:#444;"></div>
<div class="a" style="left:616.5px;top:1206px;width:983.5px;height:11px;background:#747474;"></div>
<div class="a" style="left:616.5px;top:1217px;width:983.5px;height:3px;background:#282828;"></div>
<div class="a" style="left:616.5px;top:1220px;width:983.5px;height:6px;background:#595959;"></div>
<div class="a" style="left:616.5px;top:1226px;width:983.5px;height:1px;background:#4a4a4a;"></div>
<div class="a" style="left:616.5px;top:1227px;width:983.5px;height:29px;background:#676767;"></div>
<div class="a" style="left:616.5px;top:1256px;width:983.5px;height:1.5px;background:#484848;"></div>
<div class="a" style="left:616.5px;top:1257.5px;width:983.5px;height:4px;background:#5e5e5e;"></div>
<div class="a" style="left:757.16px;top:1220px;width:15.82px;height:41px;background:#4c4c4c;"></div>
<div class="a" style="left:758.66px;top:1208px;width:12.82px;height:7px;background:#555;"></div>
<div class="a" style="left:915.36px;top:1220px;width:15.82px;height:41px;background:#4c4c4c;"></div>
<div class="a" style="left:916.86px;top:1208px;width:12.82px;height:7px;background:#555;"></div>
<div class="a" style="left:1073.56px;top:1220px;width:15.82px;height:41px;background:#4c4c4c;"></div>
<div class="a" style="left:1075.06px;top:1208px;width:12.82px;height:7px;background:#555;"></div>
<div class="a" style="left:1231.76px;top:1220px;width:15.82px;height:41px;background:#4c4c4c;"></div>
<div class="a" style="left:1233.26px;top:1208px;width:12.82px;height:7px;background:#555;"></div>
<div class="a" style="left:1389.96px;top:1220px;width:15.82px;height:41px;background:#4c4c4c;"></div>
<div class="a" style="left:1391.46px;top:1208px;width:12.82px;height:7px;background:#555;"></div>
<div class="a" style="left:1548.16px;top:1220px;width:15.82px;height:41px;background:#4c4c4c;"></div>
<div class="a" style="left:1549.66px;top:1208px;width:12.82px;height:7px;background:#555;"></div>
<div class="a" style="left:629.8px;top:1220px;width:1.6px;height:41px;background:#4a4a4a;"></div>
<div class="a" style="left:629.85px;top:1208px;width:1.5px;height:7.5px;background:#d2d2d2;"></div>
<div class="a" style="left:645.62px;top:1220px;width:1.6px;height:41px;background:#4a4a4a;"></div>
<div class="a" style="left:645.67px;top:1208px;width:1.5px;height:7.5px;background:#d2d2d2;"></div>
<div class="a" style="left:661.44px;top:1220px;width:1.6px;height:41px;background:#4a4a4a;"></div>
<div class="a" style="left:661.49px;top:1208px;width:1.5px;height:7.5px;background:#d2d2d2;"></div>
<div class="a" style="left:677.26px;top:1220px;width:1.6px;height:41px;background:#4a4a4a;"></div>
<div class="a" style="left:677.31px;top:1208px;width:1.5px;height:7.5px;background:#d2d2d2;"></div>
<div class="a" style="left:693.08px;top:1220px;width:1.6px;height:41px;background:#4a4a4a;"></div>
<div class="a" style="left:693.13px;top:1208px;width:1.5px;height:7.5px;background:#d2d2d2;"></div>
<div class="a" style="left:708.9px;top:1220px;width:1.6px;height:41px;background:#4a4a4a;"></div>
<div class="a" style="left:708.95px;top:1208px;width:1.5px;height:7.5px;background:#d2d2d2;"></div>
<div class="a" style="left:724.72px;top:1220px;width:1.6px;height:41px;background:#4a4a4a;"></div>
<div class="a" style="left:724.77px;top:1208px;width:1.5px;height:7.5px;background:#d2d2d2;"></div>
<div class="a" style="left:740.54px;top:1220px;width:1.6px;height:41px;background:#4a4a4a;"></div>
<div class="a" style="left:740.59px;top:1208px;width:1.5px;height:7.5px;background:#d2d2d2;"></div>
<div class="a" style="left:756.36px;top:1220px;width:1.6px;height:41px;background:#4a4a4a;"></div>
<div class="a" style="left:756.41px;top:1208px;width:1.5px;height:7.5px;background:#d2d2d2;"></div>
<div class="a" style="left:772.18px;top:1220px;width:1.6px;height:41px;background:#4a4a4a;"></div>
<div class="a" style="left:772.23px;top:1208px;width:1.5px;height:7.5px;background:#d2d2d2;"></div>
<div class="a" style="left:788.0px;top:1220px;width:1.6px;height:41px;background:#4a4a4a;"></div>
<div class="a" style="left:788.05px;top:1208px;width:1.5px;height:7.5px;background:#d2d2d2;"></div>
<div class="a" style="left:803.82px;top:1220px;width:1.6px;height:41px;background:#4a4a4a;"></div>
<div class="a" style="left:803.87px;top:1208px;width:1.5px;height:7.5px;background:#d2d2d2;"></div>
<div class="a" style="left:819.64px;top:1220px;width:1.6px;height:41px;background:#4a4a4a;"></div>
<div class="a" style="left:819.69px;top:1208px;width:1.5px;height:7.5px;background:#d2d2d2;"></div>
<div class="a" style="left:835.46px;top:1220px;width:1.6px;height:41px;background:#4a4a4a;"></div>
<div class="a" style="left:835.51px;top:1208px;width:1.5px;height:7.5px;background:#d2d2d2;"></div>
<div class="a" style="left:851.28px;top:1220px;width:1.6px;height:41px;background:#4a4a4a;"></div>
<div class="a" style="left:851.33px;top:1208px;width:1.5px;height:7.5px;background:#d2d2d2;"></div>
<div class="a" style="left:867.1px;top:1220px;width:1.6px;height:41px;background:#4a4a4a;"></div>
<div class="a" style="left:867.15px;top:1208px;width:1.5px;height:7.5px;background:#d2d2d2;"></div>
<div class="a" style="left:882.92px;top:1220px;width:1.6px;height:41px;background:#4a4a4a;"></div>
<div class="a" style="left:882.97px;top:1208px;width:1.5px;height:7.5px;background:#d2d2d2;"></div>
<div class="a" style="left:898.74px;top:1220px;width:1.6px;height:41px;background:#4a4a4a;"></div>
<div class="a" style="left:898.79px;top:1208px;width:1.5px;height:7.5px;background:#d2d2d2;"></div>
<div class="a" style="left:914.56px;top:1220px;width:1.6px;height:41px;background:#4a4a4a;"></div>
<div class="a" style="left:914.61px;top:1208px;width:1.5px;height:7.5px;background:#d2d2d2;"></div>
<div class="a" style="left:930.38px;top:1220px;width:1.6px;height:41px;background:#4a4a4a;"></div>
<div class="a" style="left:930.43px;top:1208px;width:1.5px;height:7.5px;background:#d2d2d2;"></div>
<div class="a" style="left:946.2px;top:1220px;width:1.6px;height:41px;background:#4a4a4a;"></div>
<div class="a" style="left:946.25px;top:1208px;width:1.5px;height:7.5px;background:#d2d2d2;"></div>
<div class="a" style="left:962.02px;top:1220px;width:1.6px;height:41px;background:#4a4a4a;"></div>
<div class="a" style="left:962.07px;top:1208px;width:1.5px;height:7.5px;background:#d2d2d2;"></div>
<div class="a" style="left:977.84px;top:1220px;width:1.6px;height:41px;background:#4a4a4a;"></div>
<div class="a" style="left:977.89px;top:1208px;width:1.5px;height:7.5px;background:#d2d2d2;"></div>
<div class="a" style="left:993.66px;top:1220px;width:1.6px;height:41px;background:#4a4a4a;"></div>
<div class="a" style="left:993.71px;top:1208px;width:1.5px;height:7.5px;background:#d2d2d2;"></div>
<div class="a" style="left:1009.48px;top:1220px;width:1.6px;height:41px;background:#4a4a4a;"></div>
<div class="a" style="left:1009.53px;top:1208px;width:1.5px;height:7.5px;background:#d2d2d2;"></div>
<div class="a" style="left:1025.3px;top:1220px;width:1.6px;height:41px;background:#4a4a4a;"></div>
<div class="a" style="left:1025.35px;top:1208px;width:1.5px;height:7.5px;background:#d2d2d2;"></div>
<div class="a" style="left:1041.12px;top:1220px;width:1.6px;height:41px;background:#4a4a4a;"></div>
<div class="a" style="left:1041.17px;top:1208px;width:1.5px;height:7.5px;background:#d2d2d2;"></div>
<div class="a" style="left:1056.94px;top:1220px;width:1.6px;height:41px;background:#4a4a4a;"></div>
<div class="a" style="left:1056.99px;top:1208px;width:1.5px;height:7.5px;background:#d2d2d2;"></div>
<div class="a" style="left:1072.76px;top:1220px;width:1.6px;height:41px;background:#4a4a4a;"></div>
<div class="a" style="left:1072.81px;top:1208px;width:1.5px;height:7.5px;background:#d2d2d2;"></div>
<div class="a" style="left:1088.58px;top:1220px;width:1.6px;height:41px;background:#4a4a4a;"></div>
<div class="a" style="left:1088.63px;top:1208px;width:1.5px;height:7.5px;background:#d2d2d2;"></div>
<div class="a" style="left:1104.4px;top:1220px;width:1.6px;height:41px;background:#4a4a4a;"></div>
<div class="a" style="left:1104.45px;top:1208px;width:1.5px;height:7.5px;background:#d2d2d2;"></div>
<div class="a" style="left:1120.22px;top:1220px;width:1.6px;height:41px;background:#4a4a4a;"></div>
<div class="a" style="left:1120.27px;top:1208px;width:1.5px;height:7.5px;background:#d2d2d2;"></div>
<div class="a" style="left:1136.04px;top:1220px;width:1.6px;height:41px;background:#4a4a4a;"></div>
<div class="a" style="left:1136.09px;top:1208px;width:1.5px;height:7.5px;background:#d2d2d2;"></div>
<div class="a" style="left:1151.86px;top:1220px;width:1.6px;height:41px;background:#4a4a4a;"></div>
<div class="a" style="left:1151.91px;top:1208px;width:1.5px;height:7.5px;background:#d2d2d2;"></div>
<div class="a" style="left:1167.68px;top:1220px;width:1.6px;height:41px;background:#4a4a4a;"></div>
<div class="a" style="left:1167.73px;top:1208px;width:1.5px;height:7.5px;background:#d2d2d2;"></div>
<div class="a" style="left:1183.5px;top:1220px;width:1.6px;height:41px;background:#4a4a4a;"></div>
<div class="a" style="left:1183.55px;top:1208px;width:1.5px;height:7.5px;background:#d2d2d2;"></div>
<div class="a" style="left:1199.32px;top:1220px;width:1.6px;height:41px;background:#4a4a4a;"></div>
<div class="a" style="left:1199.37px;top:1208px;width:1.5px;height:7.5px;background:#d2d2d2;"></div>
<div class="a" style="left:1215.14px;top:1220px;width:1.6px;height:41px;background:#4a4a4a;"></div>
<div class="a" style="left:1215.19px;top:1208px;width:1.5px;height:7.5px;background:#d2d2d2;"></div>
<div class="a" style="left:1230.96px;top:1220px;width:1.6px;height:41px;background:#4a4a4a;"></div>
<div class="a" style="left:1231.01px;top:1208px;width:1.5px;height:7.5px;background:#d2d2d2;"></div>
<div class="a" style="left:1246.78px;top:1220px;width:1.6px;height:41px;background:#4a4a4a;"></div>
<div class="a" style="left:1246.83px;top:1208px;width:1.5px;height:7.5px;background:#d2d2d2;"></div>
<div class="a" style="left:1262.6px;top:1220px;width:1.6px;height:41px;background:#4a4a4a;"></div>
<div class="a" style="left:1262.65px;top:1208px;width:1.5px;height:7.5px;background:#d2d2d2;"></div>
<div class="a" style="left:1278.42px;top:1220px;width:1.6px;height:41px;background:#4a4a4a;"></div>
<div class="a" style="left:1278.47px;top:1208px;width:1.5px;height:7.5px;background:#d2d2d2;"></div>
<div class="a" style="left:1294.24px;top:1220px;width:1.6px;height:41px;background:#4a4a4a;"></div>
<div class="a" style="left:1294.29px;top:1208px;width:1.5px;height:7.5px;background:#d2d2d2;"></div>
<div class="a" style="left:1310.06px;top:1220px;width:1.6px;height:41px;background:#4a4a4a;"></div>
<div class="a" style="left:1310.11px;top:1208px;width:1.5px;height:7.5px;background:#d2d2d2;"></div>
<div class="a" style="left:1325.88px;top:1220px;width:1.6px;height:41px;background:#4a4a4a;"></div>
<div class="a" style="left:1325.93px;top:1208px;width:1.5px;height:7.5px;background:#d2d2d2;"></div>
<div class="a" style="left:1341.7px;top:1220px;width:1.6px;height:41px;background:#4a4a4a;"></div>
<div class="a" style="left:1341.75px;top:1208px;width:1.5px;height:7.5px;background:#d2d2d2;"></div>
<div class="a" style="left:1357.52px;top:1220px;width:1.6px;height:41px;background:#4a4a4a;"></div>
<div class="a" style="left:1357.57px;top:1208px;width:1.5px;height:7.5px;background:#d2d2d2;"></div>
<div class="a" style="left:1373.34px;top:1220px;width:1.6px;height:41px;background:#4a4a4a;"></div>
<div class="a" style="left:1373.39px;top:1208px;width:1.5px;height:7.5px;background:#d2d2d2;"></div>
<div class="a" style="left:1389.16px;top:1220px;width:1.6px;height:41px;background:#4a4a4a;"></div>
<div class="a" style="left:1389.21px;top:1208px;width:1.5px;height:7.5px;background:#d2d2d2;"></div>
<div class="a" style="left:1404.98px;top:1220px;width:1.6px;height:41px;background:#4a4a4a;"></div>
<div class="a" style="left:1405.03px;top:1208px;width:1.5px;height:7.5px;background:#d2d2d2;"></div>
<div class="a" style="left:1420.8px;top:1220px;width:1.6px;height:41px;background:#4a4a4a;"></div>
<div class="a" style="left:1420.85px;top:1208px;width:1.5px;height:7.5px;background:#d2d2d2;"></div>
<div class="a" style="left:1436.62px;top:1220px;width:1.6px;height:41px;background:#4a4a4a;"></div>
<div class="a" style="left:1436.67px;top:1208px;width:1.5px;height:7.5px;background:#d2d2d2;"></div>
<div class="a" style="left:1452.44px;top:1220px;width:1.6px;height:41px;background:#4a4a4a;"></div>
<div class="a" style="left:1452.49px;top:1208px;width:1.5px;height:7.5px;background:#d2d2d2;"></div>
<div class="a" style="left:1468.26px;top:1220px;width:1.6px;height:41px;background:#4a4a4a;"></div>
<div class="a" style="left:1468.31px;top:1208px;width:1.5px;height:7.5px;background:#d2d2d2;"></div>
<div class="a" style="left:1484.08px;top:1220px;width:1.6px;height:41px;background:#4a4a4a;"></div>
<div class="a" style="left:1484.13px;top:1208px;width:1.5px;height:7.5px;background:#d2d2d2;"></div>
<div class="a" style="left:1499.9px;top:1220px;width:1.6px;height:41px;background:#4a4a4a;"></div>
<div class="a" style="left:1499.95px;top:1208px;width:1.5px;height:7.5px;background:#d2d2d2;"></div>
<div class="a" style="left:1515.72px;top:1220px;width:1.6px;height:41px;background:#4a4a4a;"></div>
<div class="a" style="left:1515.77px;top:1208px;width:1.5px;height:7.5px;background:#d2d2d2;"></div>
<div class="a" style="left:1531.54px;top:1220px;width:1.6px;height:41px;background:#4a4a4a;"></div>
<div class="a" style="left:1531.59px;top:1208px;width:1.5px;height:7.5px;background:#d2d2d2;"></div>
<div class="a" style="left:1547.36px;top:1220px;width:1.6px;height:41px;background:#4a4a4a;"></div>
<div class="a" style="left:1547.41px;top:1208px;width:1.5px;height:7.5px;background:#d2d2d2;"></div>
<div class="a" style="left:1563.18px;top:1220px;width:1.6px;height:41px;background:#4a4a4a;"></div>
<div class="a" style="left:1563.23px;top:1208px;width:1.5px;height:7.5px;background:#d2d2d2;"></div>
<div class="a" style="left:1579.0px;top:1220px;width:1.6px;height:41px;background:#4a4a4a;"></div>
<div class="a" style="left:1579.05px;top:1208px;width:1.5px;height:7.5px;background:#d2d2d2;"></div>
<div class="a" style="left:617.5px;top:1183.5px;width:156px;height:20.5px;background:#4a5560;border:1px solid #5a6a78"></div>
<svg class="a" style="left:770px;top:1183px" width="14.00" height="22.00" viewBox="0 0 14 22"><path d="M2.5,1 H12 L3,20 Z" fill="#2e8a3a" stroke="#1a4a20" stroke-width="0.8"/></svg>
<div class="a" style="left:617px;top:1206px;width:3.5px;height:11px;background:#000;"></div>
<div class="t" style="left:755px;top:1186.96px;font-size:18px;color:#b8c4d0;font-weight:400;">10</div>
<div class="t" style="left:914px;top:1186.96px;font-size:18px;color:#c8c8c8;font-weight:400;">20</div>
<div class="t" style="left:1071px;top:1186.96px;font-size:18px;color:#c8c8c8;font-weight:400;">30</div>
<div class="t" style="left:1229px;top:1186.96px;font-size:18px;color:#c8c8c8;font-weight:400;">40</div>
<div class="t" style="left:1389px;top:1186.96px;font-size:18px;color:#c8c8c8;font-weight:400;">50</div>
<div class="t" style="left:1545px;top:1186.96px;font-size:18px;color:#c8c8c8;font-weight:400;">60</div>
<div class="a" style="left:622px;top:1206px;width:2px;height:55px;background:#e02020;"></div>
<svg class="a" style="left:616px;top:1181px" width="14.00" height="30.00" viewBox="0 0 14 30"><path d="M2.5,1.5 H11.5 V20 L7,27 L2.5,20 Z" fill="#d41c24" stroke="#7a0a10" stroke-width="0.8"/></svg>
</body></html>
